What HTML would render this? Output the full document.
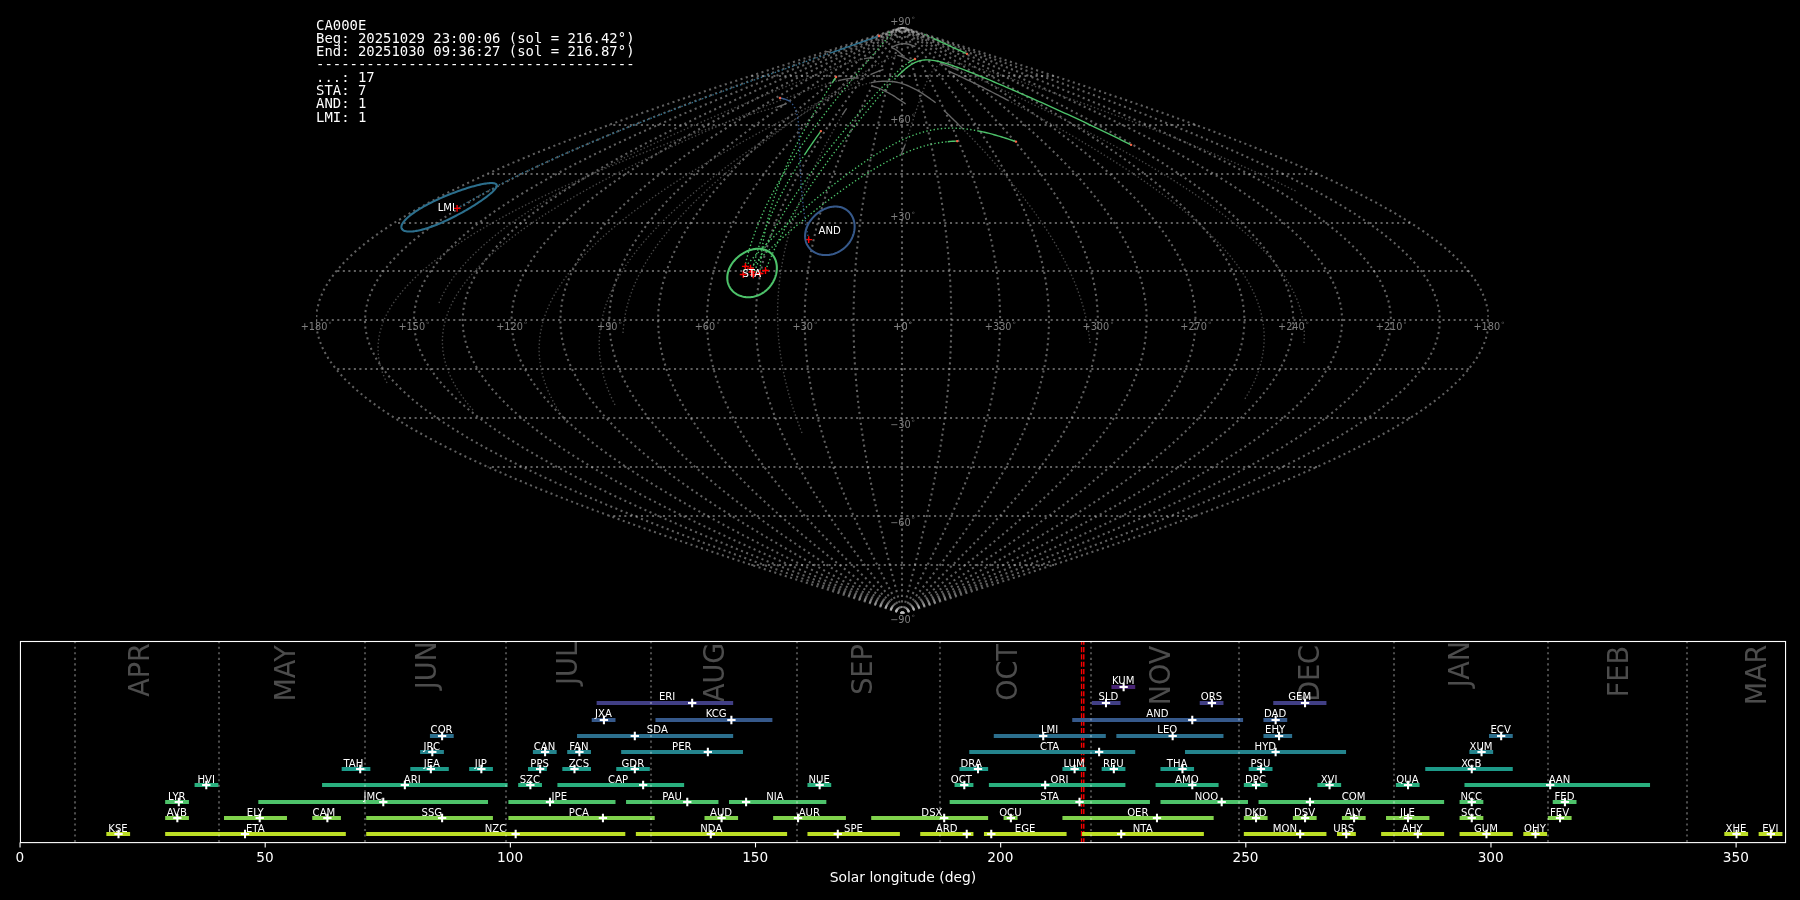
<!DOCTYPE html>
<html lang="en"><head><meta charset="utf-8"><title>Shower association CA000E</title>
<style>
html,body{margin:0;padding:0;background:#000;width:1800px;height:900px;overflow:hidden}
svg{display:block;will-change:transform;opacity:0.999}
</style></head><body>
<svg width="1800" height="900" viewBox="0 0 1800 900">
<defs>
<clipPath id="skyclip"><rect x="316.03" y="27.12" width="1172.74" height="586.37"/></clipPath>
<clipPath id="actclip"><rect x="20.45" y="641.5" width="1765.1" height="201.1"/></clipPath>
</defs>
<g clip-path="url(#skyclip)" fill="none">
<g stroke="#c0c0c0" stroke-opacity="0.5" stroke-width="2.08" stroke-dasharray="2.08 3.44">
<path d="M902 613.48L902 603.71L902 593.94L902 584.17L902 574.39L902 564.62L902 554.85L902 545.07L902 535.3L902 525.53L902 515.76L902 505.98L902 496.21L902 486.44L902 476.66L902 466.89L902 457.12L902 447.35L902 437.57L902 427.8L902 418.03L902 408.26L902 398.48L902 388.71L902 378.94L902 369.16L902 359.39L902 349.62L902 339.85L902 330.07L902 320.3L902 310.53L902 300.75L902 290.98L902 281.21L902 271.44L902 261.66L902 251.89L902 242.12L902 232.34L902 222.57L902 212.8L902 203.03L902 193.25L902 183.48L902 173.71L902 163.94L902 154.16L902 144.39L902 134.62L902 124.84L902 115.07L902 105.3L902 95.53L902 85.75L902 75.98L902 66.21L902 56.43L902 46.66L902 36.89L902 27.12"/>
<path d="M902.4 613.48L899.84 603.71L897.29 593.94L894.76 584.17L892.24 574.39L889.75 564.62L887.3 554.85L884.89 545.07L882.53 535.3L880.22 525.53L877.97 515.76L875.79 505.98L873.68 496.21L871.65 486.44L869.7 476.66L867.85 466.89L866.09 457.12L864.43 447.35L862.87 437.57L861.42 427.8L860.08 418.03L858.86 408.26L857.76 398.48L856.78 388.71L855.93 378.94L855.2 369.16L854.6 359.39L854.14 349.62L853.8 339.85L853.6 330.07L853.54 320.3L853.6 310.53L853.8 300.75L854.14 290.98L854.6 281.21L855.2 271.44L855.93 261.66L856.78 251.89L857.76 242.12L858.86 232.34L860.08 222.57L861.42 212.8L862.87 203.03L864.43 193.25L866.09 183.48L867.85 173.71L869.7 163.94L871.65 154.16L873.68 144.39L875.79 134.62L877.97 124.84L880.22 115.07L882.53 105.3L884.89 95.53L887.3 85.75L889.75 75.98L892.24 66.21L894.76 56.43L897.29 46.66L899.84 36.89L902.4 27.12"/>
<path d="M902.4 613.48L897.29 603.71L892.18 593.94L887.11 584.17L882.08 574.39L877.11 564.62L872.2 554.85L867.38 545.07L862.65 535.3L858.03 525.53L853.54 515.76L849.17 505.98L844.96 496.21L840.9 486.44L837.01 476.66L833.3 466.89L829.77 457.12L826.45 447.35L823.34 437.57L820.44 427.8L817.77 418.03L815.32 408.26L813.12 398.48L811.16 388.71L809.46 378.94L808 369.16L806.81 359.39L805.88 349.62L805.21 339.85L804.81 330.07L804.67 320.3L804.81 310.53L805.21 300.75L805.88 290.98L806.81 281.21L808 271.44L809.46 261.66L811.16 251.89L813.12 242.12L815.32 232.34L817.77 222.57L820.44 212.8L823.34 203.03L826.45 193.25L829.77 183.48L833.3 173.71L837.01 163.94L840.9 154.16L844.96 144.39L849.17 134.62L853.54 124.84L858.03 115.07L862.65 105.3L867.38 95.53L872.2 85.75L877.11 75.98L882.08 66.21L887.11 56.43L892.18 46.66L897.29 36.89L902.4 27.12"/>
<path d="M902.4 613.48L894.73 603.71L887.08 593.94L879.47 584.17L871.92 574.39L864.46 564.62L857.1 554.85L849.87 545.07L842.78 535.3L835.85 525.53L829.1 515.76L822.56 505.98L816.24 496.21L810.15 486.44L804.31 476.66L798.74 466.89L793.46 457.12L788.48 447.35L783.8 437.57L779.46 427.8L775.45 418.03L771.79 408.26L768.48 398.48L765.54 388.71L762.98 378.94L760.8 369.16L759.01 359.39L757.61 349.62L756.61 339.85L756.01 330.07L755.81 320.3L756.01 310.53L756.61 300.75L757.61 290.98L759.01 281.21L760.8 271.44L762.98 261.66L765.54 251.89L768.48 242.12L771.79 232.34L775.45 222.57L779.46 212.8L783.8 203.03L788.48 193.25L793.46 183.48L798.74 173.71L804.31 163.94L810.15 154.16L816.24 144.39L822.56 134.62L829.1 124.84L835.85 115.07L842.78 105.3L849.87 95.53L857.1 85.75L864.46 75.98L871.92 66.21L879.47 56.43L887.08 46.66L894.73 36.89L902.4 27.12"/>
<path d="M902.4 613.48L892.17 603.71L881.97 593.94L871.82 584.17L861.76 574.39L851.81 564.62L842 554.85L832.35 545.07L822.9 535.3L813.66 525.53L804.67 515.76L795.95 505.98L787.51 496.21L779.4 486.44L771.61 476.66L764.19 466.89L757.15 457.12L750.5 447.35L744.27 437.57L738.48 427.8L733.13 418.03L728.25 408.26L723.84 398.48L719.93 388.71L716.51 378.94L713.6 369.16L711.22 359.39L709.35 349.62L708.01 339.85L707.21 330.07L706.94 320.3L707.21 310.53L708.01 300.75L709.35 290.98L711.22 281.21L713.6 271.44L716.51 261.66L719.93 251.89L723.84 242.12L728.25 232.34L733.13 222.57L738.48 212.8L744.27 203.03L750.5 193.25L757.15 183.48L764.19 173.71L771.61 163.94L779.4 154.16L787.51 144.39L795.95 134.62L804.67 124.84L813.66 115.07L822.9 105.3L832.35 95.53L842 85.75L851.81 75.98L861.76 66.21L871.82 56.43L881.97 46.66L892.17 36.89L902.4 27.12"/>
<path d="M902.4 613.48L889.61 603.71L876.86 593.94L864.18 584.17L851.6 574.39L839.17 564.62L826.9 554.85L814.84 545.07L803.03 535.3L791.48 525.53L780.24 515.76L769.33 505.98L758.79 496.21L748.64 486.44L738.92 476.66L729.64 466.89L720.83 457.12L712.53 447.35L704.74 437.57L697.5 427.8L690.81 418.03L684.71 408.26L679.2 398.48L674.31 388.71L670.04 378.94L666.41 369.16L663.42 359.39L661.09 349.62L659.42 339.85L658.41 330.07L658.08 320.3L658.41 310.53L659.42 300.75L661.09 290.98L663.42 281.21L666.41 271.44L670.04 261.66L674.31 251.89L679.2 242.12L684.71 232.34L690.81 222.57L697.5 212.8L704.74 203.03L712.53 193.25L720.83 183.48L729.64 173.71L738.92 163.94L748.64 154.16L758.79 144.39L769.33 134.62L780.24 124.84L791.48 115.07L803.03 105.3L814.84 95.53L826.9 85.75L839.17 75.98L851.6 66.21L864.18 56.43L876.86 46.66L889.61 36.89L902.4 27.12"/>
<path d="M902.4 613.48L887.06 603.71L871.75 593.94L856.54 584.17L841.44 574.39L826.52 564.62L811.8 554.85L797.33 545.07L783.15 535.3L769.3 525.53L755.81 515.76L742.72 505.98L730.07 496.21L717.89 486.44L706.22 476.66L695.09 466.89L684.52 457.12L674.55 447.35L665.21 437.57L656.52 427.8L648.5 418.03L641.17 408.26L634.56 398.48L628.69 388.71L623.57 378.94L619.21 369.16L615.62 359.39L612.83 349.62L610.82 339.85L609.62 330.07L609.22 320.3L609.62 310.53L610.82 300.75L612.83 290.98L615.62 281.21L619.21 271.44L623.57 261.66L628.69 251.89L634.56 242.12L641.17 232.34L648.5 222.57L656.52 212.8L665.21 203.03L674.55 193.25L684.52 183.48L695.09 173.71L706.22 163.94L717.89 154.16L730.07 144.39L742.72 134.62L755.81 124.84L769.3 115.07L783.15 105.3L797.33 95.53L811.8 85.75L826.52 75.98L841.44 66.21L856.54 56.43L871.75 46.66L887.06 36.89L902.4 27.12"/>
<path d="M902.4 613.48L884.5 603.71L866.65 593.94L848.89 584.17L831.28 574.39L813.87 564.62L796.7 554.85L779.82 545.07L763.28 535.3L747.11 525.53L731.38 515.76L716.11 505.98L701.35 496.21L687.14 486.44L673.53 476.66L660.54 466.89L648.21 457.12L636.58 447.35L625.68 437.57L615.53 427.8L606.18 418.03L597.63 408.26L589.92 398.48L583.07 388.71L577.09 378.94L572.01 369.16L567.83 359.39L564.56 349.62L562.23 339.85L560.82 330.07L560.35 320.3L560.82 310.53L562.23 300.75L564.56 290.98L567.83 281.21L572.01 271.44L577.09 261.66L583.07 251.89L589.92 242.12L597.63 232.34L606.18 222.57L615.53 212.8L625.68 203.03L636.58 193.25L648.21 183.48L660.54 173.71L673.53 163.94L687.14 154.16L701.35 144.39L716.11 134.62L731.38 124.84L747.11 115.07L763.28 105.3L779.82 95.53L796.7 85.75L813.87 75.98L831.28 66.21L848.89 56.43L866.65 46.66L884.5 36.89L902.4 27.12"/>
<path d="M902.4 613.48L881.94 603.71L861.54 593.94L841.25 584.17L821.12 574.39L801.22 564.62L781.6 554.85L762.31 545.07L743.4 535.3L724.93 525.53L706.94 515.76L689.49 505.98L672.63 496.21L656.39 486.44L640.83 476.66L625.98 466.89L611.9 457.12L598.6 447.35L586.15 437.57L574.55 427.8L563.86 418.03L554.09 408.26L545.28 398.48L537.45 388.71L530.62 378.94L524.81 369.16L520.03 359.39L516.3 349.62L513.63 339.85L512.02 330.07L511.49 320.3L512.02 310.53L513.63 300.75L516.3 290.98L520.03 281.21L524.81 271.44L530.62 261.66L537.45 251.89L545.28 242.12L554.09 232.34L563.86 222.57L574.55 212.8L586.15 203.03L598.6 193.25L611.9 183.48L625.98 173.71L640.83 163.94L656.39 154.16L672.63 144.39L689.49 134.62L706.94 124.84L724.93 115.07L743.4 105.3L762.31 95.53L781.6 85.75L801.22 75.98L821.12 66.21L841.25 56.43L861.54 46.66L881.94 36.89L902.4 27.12"/>
<path d="M902.4 613.48L879.38 603.71L856.43 593.94L833.6 584.17L810.97 574.39L788.58 564.62L766.5 554.85L744.8 545.07L723.53 535.3L702.75 525.53L682.51 515.76L662.88 505.98L643.91 496.21L625.64 486.44L608.13 476.66L591.43 466.89L575.58 457.12L560.63 447.35L546.61 437.57L533.57 427.8L521.54 418.03L510.56 408.26L500.64 398.48L491.83 388.71L484.15 378.94L477.61 369.16L472.23 359.39L468.04 349.62L465.03 339.85L463.23 330.07L462.62 320.3L463.23 310.53L465.03 300.75L468.04 290.98L472.23 281.21L477.61 271.44L484.15 261.66L491.83 251.89L500.64 242.12L510.56 232.34L521.54 222.57L533.57 212.8L546.61 203.03L560.63 193.25L575.58 183.48L591.43 173.71L608.13 163.94L625.64 154.16L643.91 144.39L662.88 134.62L682.51 124.84L702.75 115.07L723.53 105.3L744.8 95.53L766.5 85.75L788.58 75.98L810.97 66.21L833.6 56.43L856.43 46.66L879.38 36.89L902.4 27.12"/>
<path d="M902.4 613.48L876.83 603.71L851.32 593.94L825.96 584.17L800.81 574.39L775.93 564.62L751.4 554.85L727.29 545.07L703.65 535.3L680.56 525.53L658.08 515.76L636.27 505.98L615.18 496.21L594.89 486.44L575.44 476.66L556.88 466.89L539.27 457.12L522.66 447.35L507.08 437.57L492.59 427.8L479.23 418.03L467.02 408.26L456.01 398.48L446.22 388.71L437.68 378.94L430.41 369.16L424.44 359.39L419.78 349.62L416.44 339.85L414.43 330.07L413.76 320.3L414.43 310.53L416.44 300.75L419.78 290.98L424.44 281.21L430.41 271.44L437.68 261.66L446.22 251.89L456.01 242.12L467.02 232.34L479.23 222.57L492.59 212.8L507.08 203.03L522.66 193.25L539.27 183.48L556.88 173.71L575.44 163.94L594.89 154.16L615.18 144.39L636.27 134.62L658.08 124.84L680.56 115.07L703.65 105.3L727.29 95.53L751.4 85.75L775.93 75.98L800.81 66.21L825.96 56.43L851.32 46.66L876.83 36.89L902.4 27.12"/>
<path d="M902.4 613.48L874.27 603.71L846.22 593.94L818.32 584.17L790.65 574.39L763.28 564.62L736.3 554.85L709.78 545.07L683.78 535.3L658.38 525.53L633.65 515.76L609.65 505.98L586.46 496.21L564.14 486.44L542.74 476.66L522.33 466.89L502.96 457.12L484.68 447.35L467.55 437.57L451.61 427.8L436.91 418.03L423.48 408.26L411.37 398.48L400.6 388.71L391.2 378.94L383.21 369.16L376.64 359.39L371.51 349.62L367.84 339.85L365.63 330.07L364.9 320.3L365.63 310.53L367.84 300.75L371.51 290.98L376.64 281.21L383.21 271.44L391.2 261.66L400.6 251.89L411.37 242.12L423.48 232.34L436.91 222.57L451.61 212.8L467.55 203.03L484.68 193.25L502.96 183.48L522.33 173.71L542.74 163.94L564.14 154.16L586.46 144.39L609.65 134.62L633.65 124.84L658.38 115.07L683.78 105.3L709.78 95.53L736.3 85.75L763.28 75.98L790.65 66.21L818.32 56.43L846.22 46.66L874.27 36.89L902.4 27.12"/>
<path d="M902.4 613.48L871.71 603.71L841.11 593.94L810.67 584.17L780.49 574.39L750.64 564.62L721.2 554.85L692.26 545.07L663.9 535.3L636.19 525.53L609.22 515.76L583.04 505.98L557.74 496.21L533.39 486.44L510.04 476.66L487.78 466.89L466.64 457.12L446.71 447.35L428.02 437.57L410.63 427.8L394.59 418.03L379.94 408.26L366.73 398.48L354.98 388.71L344.73 378.94L336.01 369.16L328.85 359.39L323.25 349.62L319.24 339.85L316.84 330.07L316.03 320.3L316.84 310.53L319.24 300.75L323.25 290.98L328.85 281.21L336.01 271.44L344.73 261.66L354.98 251.89L366.73 242.12L379.94 232.34L394.59 222.57L410.63 212.8L428.02 203.03L446.71 193.25L466.64 183.48L487.78 173.71L510.04 163.94L533.39 154.16L557.74 144.39L583.04 134.62L609.22 124.84L636.19 115.07L663.9 105.3L692.26 95.53L721.2 85.75L750.64 75.98L780.49 66.21L810.67 56.43L841.11 46.66L871.71 36.89L902.4 27.12"/>
<path d="M902.4 613.48L933.09 603.71L963.69 593.94L994.13 584.17L1024.31 574.39L1054.16 564.62L1083.6 554.85L1112.54 545.07L1140.9 535.3L1168.61 525.53L1195.58 515.76L1221.76 505.98L1247.06 496.21L1271.41 486.44L1294.76 476.66L1317.02 466.89L1338.16 457.12L1358.09 447.35L1376.78 437.57L1394.17 427.8L1410.21 418.03L1424.86 408.26L1438.07 398.48L1449.82 388.71L1460.07 378.94L1468.79 369.16L1475.95 359.39L1481.55 349.62L1485.56 339.85L1487.96 330.07L1488.77 320.3L1487.96 310.53L1485.56 300.75L1481.55 290.98L1475.95 281.21L1468.79 271.44L1460.07 261.66L1449.82 251.89L1438.07 242.12L1424.86 232.34L1410.21 222.57L1394.17 212.8L1376.78 203.03L1358.09 193.25L1338.16 183.48L1317.02 173.71L1294.76 163.94L1271.41 154.16L1247.06 144.39L1221.76 134.62L1195.58 124.84L1168.61 115.07L1140.9 105.3L1112.54 95.53L1083.6 85.75L1054.16 75.98L1024.31 66.21L994.13 56.43L963.69 46.66L933.09 36.89L902.4 27.12"/>
<path d="M902.4 613.48L930.53 603.71L958.58 593.94L986.48 584.17L1014.15 574.39L1041.52 564.62L1068.5 554.85L1095.02 545.07L1121.02 535.3L1146.42 525.53L1171.15 515.76L1195.15 505.98L1218.34 496.21L1240.66 486.44L1262.06 476.66L1282.47 466.89L1301.84 457.12L1320.12 447.35L1337.25 437.57L1353.19 427.8L1367.89 418.03L1381.32 408.26L1393.43 398.48L1404.2 388.71L1413.6 378.94L1421.59 369.16L1428.16 359.39L1433.29 349.62L1436.96 339.85L1439.17 330.07L1439.9 320.3L1439.17 310.53L1436.96 300.75L1433.29 290.98L1428.16 281.21L1421.59 271.44L1413.6 261.66L1404.2 251.89L1393.43 242.12L1381.32 232.34L1367.89 222.57L1353.19 212.8L1337.25 203.03L1320.12 193.25L1301.84 183.48L1282.47 173.71L1262.06 163.94L1240.66 154.16L1218.34 144.39L1195.15 134.62L1171.15 124.84L1146.42 115.07L1121.02 105.3L1095.02 95.53L1068.5 85.75L1041.52 75.98L1014.15 66.21L986.48 56.43L958.58 46.66L930.53 36.89L902.4 27.12"/>
<path d="M902.4 613.48L927.97 603.71L953.48 593.94L978.84 584.17L1003.99 574.39L1028.87 564.62L1053.4 554.85L1077.51 545.07L1101.15 535.3L1124.24 525.53L1146.72 515.76L1168.53 505.98L1189.62 496.21L1209.91 486.44L1229.36 476.66L1247.92 466.89L1265.53 457.12L1282.14 447.35L1297.72 437.57L1312.21 427.8L1325.57 418.03L1337.78 408.26L1348.79 398.48L1358.58 388.71L1367.12 378.94L1374.39 369.16L1380.36 359.39L1385.02 349.62L1388.36 339.85L1390.37 330.07L1391.04 320.3L1390.37 310.53L1388.36 300.75L1385.02 290.98L1380.36 281.21L1374.39 271.44L1367.12 261.66L1358.58 251.89L1348.79 242.12L1337.78 232.34L1325.57 222.57L1312.21 212.8L1297.72 203.03L1282.14 193.25L1265.53 183.48L1247.92 173.71L1229.36 163.94L1209.91 154.16L1189.62 144.39L1168.53 134.62L1146.72 124.84L1124.24 115.07L1101.15 105.3L1077.51 95.53L1053.4 85.75L1028.87 75.98L1003.99 66.21L978.84 56.43L953.48 46.66L927.97 36.89L902.4 27.12"/>
<path d="M902.4 613.48L925.42 603.71L948.37 593.94L971.2 584.17L993.83 574.39L1016.22 564.62L1038.3 554.85L1060 545.07L1081.27 535.3L1102.05 525.53L1122.29 515.76L1141.92 505.98L1160.89 496.21L1179.16 486.44L1196.67 476.66L1213.37 466.89L1229.22 457.12L1244.17 447.35L1258.19 437.57L1271.23 427.8L1283.26 418.03L1294.24 408.26L1304.16 398.48L1312.97 388.71L1320.65 378.94L1327.19 369.16L1332.57 359.39L1336.76 349.62L1339.77 339.85L1341.57 330.07L1342.18 320.3L1341.57 310.53L1339.77 300.75L1336.76 290.98L1332.57 281.21L1327.19 271.44L1320.65 261.66L1312.97 251.89L1304.16 242.12L1294.24 232.34L1283.26 222.57L1271.23 212.8L1258.19 203.03L1244.17 193.25L1229.22 183.48L1213.37 173.71L1196.67 163.94L1179.16 154.16L1160.89 144.39L1141.92 134.62L1122.29 124.84L1102.05 115.07L1081.27 105.3L1060 95.53L1038.3 85.75L1016.22 75.98L993.83 66.21L971.2 56.43L948.37 46.66L925.42 36.89L902.4 27.12"/>
<path d="M902.4 613.48L922.86 603.71L943.26 593.94L963.55 584.17L983.68 574.39L1003.58 564.62L1023.2 554.85L1042.49 545.07L1061.4 535.3L1079.87 525.53L1097.86 515.76L1115.31 505.98L1132.17 496.21L1148.41 486.44L1163.97 476.66L1178.82 466.89L1192.9 457.12L1206.2 447.35L1218.65 437.57L1230.25 427.8L1240.94 418.03L1250.71 408.26L1259.52 398.48L1267.35 388.71L1274.18 378.94L1279.99 369.16L1284.77 359.39L1288.5 349.62L1291.17 339.85L1292.78 330.07L1293.31 320.3L1292.78 310.53L1291.17 300.75L1288.5 290.98L1284.77 281.21L1279.99 271.44L1274.18 261.66L1267.35 251.89L1259.52 242.12L1250.71 232.34L1240.94 222.57L1230.25 212.8L1218.65 203.03L1206.2 193.25L1192.9 183.48L1178.82 173.71L1163.97 163.94L1148.41 154.16L1132.17 144.39L1115.31 134.62L1097.86 124.84L1079.87 115.07L1061.4 105.3L1042.49 95.53L1023.2 85.75L1003.58 75.98L983.68 66.21L963.55 56.43L943.26 46.66L922.86 36.89L902.4 27.12"/>
<path d="M902.4 613.48L920.3 603.71L938.15 593.94L955.91 584.17L973.52 574.39L990.93 564.62L1008.1 554.85L1024.98 545.07L1041.52 535.3L1057.69 525.53L1073.42 515.76L1088.69 505.98L1103.45 496.21L1117.66 486.44L1131.27 476.66L1144.26 466.89L1156.59 457.12L1168.22 447.35L1179.12 437.57L1189.27 427.8L1198.62 418.03L1207.17 408.26L1214.88 398.48L1221.73 388.71L1227.71 378.94L1232.79 369.16L1236.97 359.39L1240.24 349.62L1242.57 339.85L1243.98 330.07L1244.45 320.3L1243.98 310.53L1242.57 300.75L1240.24 290.98L1236.97 281.21L1232.79 271.44L1227.71 261.66L1221.73 251.89L1214.88 242.12L1207.17 232.34L1198.62 222.57L1189.27 212.8L1179.12 203.03L1168.22 193.25L1156.59 183.48L1144.26 173.71L1131.27 163.94L1117.66 154.16L1103.45 144.39L1088.69 134.62L1073.42 124.84L1057.69 115.07L1041.52 105.3L1024.98 95.53L1008.1 85.75L990.93 75.98L973.52 66.21L955.91 56.43L938.15 46.66L920.3 36.89L902.4 27.12"/>
<path d="M902.4 613.48L917.74 603.71L933.05 593.94L948.26 584.17L963.36 574.39L978.28 564.62L993 554.85L1007.47 545.07L1021.65 535.3L1035.5 525.53L1048.99 515.76L1062.08 505.98L1074.73 496.21L1086.91 486.44L1098.58 476.66L1109.71 466.89L1120.28 457.12L1130.25 447.35L1139.59 437.57L1148.28 427.8L1156.3 418.03L1163.63 408.26L1170.24 398.48L1176.11 388.71L1181.23 378.94L1185.59 369.16L1189.18 359.39L1191.97 349.62L1193.98 339.85L1195.18 330.07L1195.58 320.3L1195.18 310.53L1193.98 300.75L1191.97 290.98L1189.18 281.21L1185.59 271.44L1181.23 261.66L1176.11 251.89L1170.24 242.12L1163.63 232.34L1156.3 222.57L1148.28 212.8L1139.59 203.03L1130.25 193.25L1120.28 183.48L1109.71 173.71L1098.58 163.94L1086.91 154.16L1074.73 144.39L1062.08 134.62L1048.99 124.84L1035.5 115.07L1021.65 105.3L1007.47 95.53L993 85.75L978.28 75.98L963.36 66.21L948.26 56.43L933.05 46.66L917.74 36.89L902.4 27.12"/>
<path d="M902.4 613.48L915.19 603.71L927.94 593.94L940.62 584.17L953.2 574.39L965.63 564.62L977.9 554.85L989.96 545.07L1001.77 535.3L1013.32 525.53L1024.56 515.76L1035.47 505.98L1046.01 496.21L1056.16 486.44L1065.88 476.66L1075.16 466.89L1083.97 457.12L1092.27 447.35L1100.06 437.57L1107.3 427.8L1113.99 418.03L1120.09 408.26L1125.6 398.48L1130.49 388.71L1134.76 378.94L1138.39 369.16L1141.38 359.39L1143.71 349.62L1145.38 339.85L1146.39 330.07L1146.72 320.3L1146.39 310.53L1145.38 300.75L1143.71 290.98L1141.38 281.21L1138.39 271.44L1134.76 261.66L1130.49 251.89L1125.6 242.12L1120.09 232.34L1113.99 222.57L1107.3 212.8L1100.06 203.03L1092.27 193.25L1083.97 183.48L1075.16 173.71L1065.88 163.94L1056.16 154.16L1046.01 144.39L1035.47 134.62L1024.56 124.84L1013.32 115.07L1001.77 105.3L989.96 95.53L977.9 85.75L965.63 75.98L953.2 66.21L940.62 56.43L927.94 46.66L915.19 36.89L902.4 27.12"/>
<path d="M902.4 613.48L912.63 603.71L922.83 593.94L932.98 584.17L943.04 574.39L952.99 564.62L962.8 554.85L972.45 545.07L981.9 535.3L991.14 525.53L1000.13 515.76L1008.85 505.98L1017.29 496.21L1025.4 486.44L1033.19 476.66L1040.61 466.89L1047.65 457.12L1054.3 447.35L1060.53 437.57L1066.32 427.8L1071.67 418.03L1076.55 408.26L1080.96 398.48L1084.87 388.71L1088.29 378.94L1091.2 369.16L1093.58 359.39L1095.45 349.62L1096.79 339.85L1097.59 330.07L1097.86 320.3L1097.59 310.53L1096.79 300.75L1095.45 290.98L1093.58 281.21L1091.2 271.44L1088.29 261.66L1084.87 251.89L1080.96 242.12L1076.55 232.34L1071.67 222.57L1066.32 212.8L1060.53 203.03L1054.3 193.25L1047.65 183.48L1040.61 173.71L1033.19 163.94L1025.4 154.16L1017.29 144.39L1008.85 134.62L1000.13 124.84L991.14 115.07L981.9 105.3L972.45 95.53L962.8 85.75L952.99 75.98L943.04 66.21L932.98 56.43L922.83 46.66L912.63 36.89L902.4 27.12"/>
<path d="M902.4 613.48L910.07 603.71L917.72 593.94L925.33 584.17L932.88 574.39L940.34 564.62L947.7 554.85L954.93 545.07L962.02 535.3L968.95 525.53L975.7 515.76L982.24 505.98L988.56 496.21L994.65 486.44L1000.49 476.66L1006.06 466.89L1011.34 457.12L1016.32 447.35L1021 437.57L1025.34 427.8L1029.35 418.03L1033.01 408.26L1036.32 398.48L1039.26 388.71L1041.82 378.94L1044 369.16L1045.79 359.39L1047.19 349.62L1048.19 339.85L1048.79 330.07L1048.99 320.3L1048.79 310.53L1048.19 300.75L1047.19 290.98L1045.79 281.21L1044 271.44L1041.82 261.66L1039.26 251.89L1036.32 242.12L1033.01 232.34L1029.35 222.57L1025.34 212.8L1021 203.03L1016.32 193.25L1011.34 183.48L1006.06 173.71L1000.49 163.94L994.65 154.16L988.56 144.39L982.24 134.62L975.7 124.84L968.95 115.07L962.02 105.3L954.93 95.53L947.7 85.75L940.34 75.98L932.88 66.21L925.33 56.43L917.72 46.66L910.07 36.89L902.4 27.12"/>
<path d="M902.4 613.48L907.51 603.71L912.62 593.94L917.69 584.17L922.72 574.39L927.69 564.62L932.6 554.85L937.42 545.07L942.15 535.3L946.77 525.53L951.26 515.76L955.63 505.98L959.84 496.21L963.9 486.44L967.79 476.66L971.5 466.89L975.03 457.12L978.35 447.35L981.46 437.57L984.36 427.8L987.03 418.03L989.48 408.26L991.68 398.48L993.64 388.71L995.34 378.94L996.8 369.16L997.99 359.39L998.92 349.62L999.59 339.85L999.99 330.07L1000.13 320.3L999.99 310.53L999.59 300.75L998.92 290.98L997.99 281.21L996.8 271.44L995.34 261.66L993.64 251.89L991.68 242.12L989.48 232.34L987.03 222.57L984.36 212.8L981.46 203.03L978.35 193.25L975.03 183.48L971.5 173.71L967.79 163.94L963.9 154.16L959.84 144.39L955.63 134.62L951.26 124.84L946.77 115.07L942.15 105.3L937.42 95.53L932.6 85.75L927.69 75.98L922.72 66.21L917.69 56.43L912.62 46.66L907.51 36.89L902.4 27.12"/>
<path d="M902.4 613.48L904.96 603.71L907.51 593.94L910.04 584.17L912.56 574.39L915.05 564.62L917.5 554.85L919.91 545.07L922.27 535.3L924.58 525.53L926.83 515.76L929.01 505.98L931.12 496.21L933.15 486.44L935.1 476.66L936.95 466.89L938.71 457.12L940.37 447.35L941.93 437.57L943.38 427.8L944.72 418.03L945.94 408.26L947.04 398.48L948.02 388.71L948.87 378.94L949.6 369.16L950.2 359.39L950.66 349.62L951 339.85L951.2 330.07L951.26 320.3L951.2 310.53L951 300.75L950.66 290.98L950.2 281.21L949.6 271.44L948.87 261.66L948.02 251.89L947.04 242.12L945.94 232.34L944.72 222.57L943.38 212.8L941.93 203.03L940.37 193.25L938.71 183.48L936.95 173.71L935.1 163.94L933.15 154.16L931.12 144.39L929.01 134.62L926.83 124.84L924.58 115.07L922.27 105.3L919.91 95.53L917.5 85.75L915.05 75.98L912.56 66.21L910.04 56.43L907.51 46.66L904.96 36.89L902.4 27.12"/>
<path d="M902.4 613L902.4 613L902.4 613L902.4 613L902.4 613L902.4 613L902.4 613L902.4 613L902.4 613L902.4 613L902.4 613L902.4 613L902.4 613"/>
<path d="M902.4 613L902.4 613L902.4 613L902.4 613L902.4 613L902.4 613L902.4 613L902.4 613L902.4 613L902.4 613L902.4 613L902.4 613L902.4 613"/>
<path d="M902.4 565L889.75 565L877.11 565L864.46 565L851.81 565L839.17 565L826.52 565L813.87 565L801.22 565L788.58 565L775.93 565L763.28 565L750.64 565"/>
<path d="M1054.16 565L1041.52 565L1028.87 565L1016.22 565L1003.58 565L990.93 565L978.28 565L965.63 565L952.99 565L940.34 565L927.69 565L915.05 565L902.4 565"/>
<path d="M902.4 516L877.97 516L853.54 516L829.1 516L804.67 516L780.24 516L755.81 516L731.38 516L706.94 516L682.51 516L658.08 516L633.65 516L609.22 516"/>
<path d="M1195.58 516L1171.15 516L1146.72 516L1122.29 516L1097.86 516L1073.42 516L1048.99 516L1024.56 516L1000.13 516L975.7 516L951.26 516L926.83 516L902.4 516"/>
<path d="M902.4 467L867.85 467L833.3 467L798.74 467L764.19 467L729.64 467L695.09 467L660.54 467L625.98 467L591.43 467L556.88 467L522.33 467L487.78 467"/>
<path d="M1317.02 467L1282.47 467L1247.92 467L1213.37 467L1178.82 467L1144.26 467L1109.71 467L1075.16 467L1040.61 467L1006.06 467L971.5 467L936.95 467L902.4 467"/>
<path d="M902.4 418L860.08 418L817.77 418L775.45 418L733.13 418L690.81 418L648.5 418L606.18 418L563.86 418L521.54 418L479.23 418L436.91 418L394.59 418"/>
<path d="M1410.21 418L1367.89 418L1325.57 418L1283.26 418L1240.94 418L1198.62 418L1156.3 418L1113.99 418L1071.67 418L1029.35 418L987.03 418L944.72 418L902.4 418"/>
<path d="M902.4 369L855.2 369L808 369L760.8 369L713.6 369L666.41 369L619.21 369L572.01 369L524.81 369L477.61 369L430.41 369L383.21 369L336.01 369"/>
<path d="M1468.79 369L1421.59 369L1374.39 369L1327.19 369L1279.99 369L1232.79 369L1185.59 369L1138.39 369L1091.2 369L1044 369L996.8 369L949.6 369L902.4 369"/>
<path d="M902.4 320L853.54 320L804.67 320L755.81 320L706.94 320L658.08 320L609.22 320L560.35 320L511.49 320L462.62 320L413.76 320L364.9 320L316.03 320"/>
<path d="M1488.77 320L1439.9 320L1391.04 320L1342.18 320L1293.31 320L1244.45 320L1195.58 320L1146.72 320L1097.86 320L1048.99 320L1000.13 320L951.26 320L902.4 320"/>
<path d="M902.4 271L855.2 271L808 271L760.8 271L713.6 271L666.41 271L619.21 271L572.01 271L524.81 271L477.61 271L430.41 271L383.21 271L336.01 271"/>
<path d="M1468.79 271L1421.59 271L1374.39 271L1327.19 271L1279.99 271L1232.79 271L1185.59 271L1138.39 271L1091.2 271L1044 271L996.8 271L949.6 271L902.4 271"/>
<path d="M902.4 223L860.08 223L817.77 223L775.45 223L733.13 223L690.81 223L648.5 223L606.18 223L563.86 223L521.54 223L479.23 223L436.91 223L394.59 223"/>
<path d="M1410.21 223L1367.89 223L1325.57 223L1283.26 223L1240.94 223L1198.62 223L1156.3 223L1113.99 223L1071.67 223L1029.35 223L987.03 223L944.72 223L902.4 223"/>
<path d="M902.4 174L867.85 174L833.3 174L798.74 174L764.19 174L729.64 174L695.09 174L660.54 174L625.98 174L591.43 174L556.88 174L522.33 174L487.78 174"/>
<path d="M1317.02 174L1282.47 174L1247.92 174L1213.37 174L1178.82 174L1144.26 174L1109.71 174L1075.16 174L1040.61 174L1006.06 174L971.5 174L936.95 174L902.4 174"/>
<path d="M902.4 125L877.97 125L853.54 125L829.1 125L804.67 125L780.24 125L755.81 125L731.38 125L706.94 125L682.51 125L658.08 125L633.65 125L609.22 125"/>
<path d="M1195.58 125L1171.15 125L1146.72 125L1122.29 125L1097.86 125L1073.42 125L1048.99 125L1024.56 125L1000.13 125L975.7 125L951.26 125L926.83 125L902.4 125"/>
<path d="M902.4 76L889.75 76L877.11 76L864.46 76L851.81 76L839.17 76L826.52 76L813.87 76L801.22 76L788.58 76L775.93 76L763.28 76L750.64 76"/>
<path d="M1054.16 76L1041.52 76L1028.87 76L1016.22 76L1003.58 76L990.93 76L978.28 76L965.63 76L952.99 76L940.34 76L927.69 76L915.05 76L902.4 76"/>
<path d="M902.4 27L902.4 27L902.4 27L902.4 27L902.4 27L902.4 27L902.4 27L902.4 27L902.4 27L902.4 27L902.4 27L902.4 27L902.4 27"/>
<path d="M902.4 27L902.4 27L902.4 27L902.4 27L902.4 27L902.4 27L902.4 27L902.4 27L902.4 27L902.4 27L902.4 27L902.4 27L902.4 27"/>
</g>
<g stroke-linecap="butt" stroke-linejoin="round">
<path d="M623 333L623.38 327.42L624 321.85L624.88 316.27L626 310.69L627.37 305.12L628.99 299.54L630.84 293.96L632.94 288.39L635.29 282.81L637.86 277.24L640.68 271.67L643.73 266.1L647 260.52L650.51 254.96L654.24 249.39L658.18 243.82L662.35 238.26L666.72 232.69L671.31 227.13L676.09 221.58L681.08 216.02L686.26 210.47L691.63 204.92L697.18 199.38L702.9 193.84L708.8 188.3L714.87 182.77L721.09 177.25L727.47 171.73L733.99 166.22L740.65 160.72L747.44 155.23L754.35 149.75L761.38 144.28L768.51 138.83L775.74 133.39L783.06 127.97L790.45 122.58L797.91 117.21L805.41 111.87L812.96 106.58L820.53 101.32L828.1 96.13L835.66 91.01L843.17 85.98L850.62 81.06L857.96 76.3L865.15 71.73L872.15 67.42L878.9 63.48L885.35 60.03L891.47 57.24L897.3 55.3" stroke="#666666" stroke-width="1.39" stroke-dasharray="1.39 2.29" stroke-opacity="0.7"/>
<path d="M439 303L441.37 297.51L444.14 292.03L447.3 286.55L450.85 281.06L454.8 275.58L459.13 270.1L463.84 264.62L468.93 259.14L474.39 253.66L480.21 248.19L486.4 242.72L492.94 237.25L499.84 231.78L507.07 226.31L514.64 220.85L522.54 215.39L530.75 209.94L539.28 204.49L548.11 199.04L557.24 193.6L566.65 188.17L576.33 182.74L586.28 177.32L596.48 171.9L606.92 166.5L617.59 161.11L628.48 155.72L639.57 150.35L650.86 145L662.32 139.66L673.93 134.34L685.69 129.05L697.57 123.78L709.56 118.54L721.62 113.34L733.74 108.19L745.88 103.08L758.01 98.04L770.09 93.08L782.08 88.22L793.91 83.49L805.51 78.91L816.79 74.53L827.65 70.43L837.96 66.67L847.55 63.37L856.28 60.66L864 58.7" stroke="#666666" stroke-width="1.39" stroke-dasharray="1.39 2.29" stroke-opacity="0.7"/>
<path d="M615 405L612.31 399.56L609.86 394.11L607.65 388.66L605.7 383.21L604 377.76L602.55 372.3L601.35 366.84L600.42 361.38L599.74 355.92L599.32 350.45L599.16 344.99L599.26 339.52L599.62 334.05L600.24 328.59L601.12 323.12L602.26 317.65L603.65 312.18L605.3 306.72L607.21 301.25L609.37 295.78L611.78 290.32L614.44 284.85L617.34 279.39L620.49 273.93L623.88 268.47L627.51 263.01L631.37 257.56L635.46 252.11L639.78 246.66L644.32 241.21L649.07 235.77L654.04 230.33L659.21 224.9L664.59 219.47L670.16 214.05L675.93 208.63L681.88 203.22L688.01 197.82L694.3 192.43L700.77 187.05L707.39 181.68L714.16 176.32L721.07 170.97L728.12 165.64L735.29 160.32L742.58 155.02L749.97 149.75L757.46 144.5L765.03 139.27L772.68 134.08L780.38 128.93L788.13 123.81L795.92 118.75L803.71 113.75L811.51 108.82L819.28 103.97L827 99.22L834.65 94.59L842.2 90.11L849.61 85.81L856.86 81.74L863.9 77.95L870.7 74.5" stroke="#666666" stroke-width="1.39" stroke-dasharray="1.39 2.29" stroke-opacity="0.7"/>
<path d="M473 410L468.47 404.67L464.29 399.33L460.46 393.98L456.98 388.63L453.87 383.27L451.12 377.91L448.75 372.55L446.74 367.18L445.11 361.8L443.86 356.43L442.99 351.05L442.5 345.67L442.39 340.29L442.66 334.9L443.32 329.52L444.35 324.13L445.77 318.75L447.57 313.36L449.74 307.98L452.3 302.6L455.22 297.21L458.52 291.83L462.19 286.45L466.22 281.08L470.61 275.7L475.36 270.33L480.46 264.96L485.9 259.6L491.69 254.24L497.81 248.89L504.25 243.54L511.02 238.2L518.1 232.86L525.49 227.53L533.17 222.21L541.14 216.9L549.39 211.6L557.92 206.32L566.7 201.04L575.73 195.78L584.99 190.53L594.49 185.3L604.19 180.09L614.1 174.9L624.19 169.74L634.46 164.6L644.88 159.49L655.44 154.41L666.11 149.37L676.89 144.38L687.75 139.43L698.67 134.53L709.62 129.7L720.58 124.94L731.51 120.26L742.38 115.68L753.16 111.22L763.81 106.88L774.28 102.7L784.52 98.7L794.48 94.91L804.1 91.38L813.31 88.14L822.07 85.24L830.32 82.74L838 80.7" stroke="#666666" stroke-width="1.39" stroke-dasharray="1.39 2.29" stroke-opacity="0.7"/>
<path d="M567 423L563.23 417.76L559.71 412.51L556.46 407.26L553.48 401.99L550.76 396.72L548.32 391.43L546.16 386.15L544.29 380.85L542.69 375.56L541.39 370.25L540.37 364.95L539.65 359.64L539.22 354.32L539.08 349.01L539.24 343.69L539.69 338.37L540.43 333.05L541.47 327.73L542.8 322.4L544.43 317.08L546.34 311.76L548.55 306.44L551.04 301.11L553.82 295.79L556.88 290.48L560.22 285.16L563.83 279.85L567.72 274.54L571.88 269.23L576.31 263.93L580.99 258.63L585.93 253.34L591.12 248.06L596.55 242.78L602.23 237.5L608.13 232.24L614.27 226.98L620.62 221.74L627.19 216.5L633.96 211.28L640.93 206.07L648.08 200.87L655.42 195.69L662.93 190.53L670.61 185.38L678.43 180.26L686.39 175.16L694.49 170.09L702.7 165.05L711.02 160.04L719.44 155.06L727.93 150.13L736.49 145.25L745.09 140.41L753.73 135.64L762.37 130.94L771.01 126.32L779.63 121.78L788.18 117.36L796.67 113.05L805.04 108.88L813.29 104.87L821.37 101.05L829.25 97.45L836.91 94.1L844.32 91.05L851.44 88.34L858.27 86.01L864.78 84.12L871 82.7" stroke="#666666" stroke-width="1.39" stroke-dasharray="1.39 2.29" stroke-opacity="0.7"/>
<path d="M387 383L384.56 377.89L382.5 372.77L380.82 367.64L379.54 362.51L378.64 357.37L378.14 352.22L378.04 347.07L378.33 341.92L379.03 336.76L380.12 331.61L381.61 326.45L383.5 321.28L385.79 316.12L388.47 310.96L391.54 305.8L395.01 300.65L398.86 295.49L403.09 290.34L407.7 285.19L412.69 280.05L418.04 274.91L423.75 269.78L429.82 264.66L436.24 259.55L443 254.44L450.09 249.35L457.51 244.27L465.24 239.2L473.28 234.14L481.62 229.1L490.24 224.08L499.14 219.08L508.29 214.09L517.7 209.13L527.34 204.2L537.2 199.29L547.27 194.41L557.53 189.57L567.97 184.76L578.56 179.99L589.29 175.26L600.14 170.58L611.09 165.96L622.11 161.4L633.18 156.9L644.28 152.48L655.39 148.13L666.46 143.88L677.48 139.73L688.4 135.69L699.2 131.78L709.85 128.01L720.3 124.4L730.51 120.97L740.45 117.73L750.08 114.71L759.35 111.93L768.24 109.42L776.7 107.2" stroke="#666666" stroke-width="1.39" stroke-dasharray="1.39 2.29" stroke-opacity="0.7"/>
<path d="M802 433L799.83 427.42L797.75 421.84L795.76 416.26L793.87 410.68L792.08 405.1L790.38 399.52L788.78 393.95L787.29 388.37L785.9 382.79L784.61 377.21L783.43 371.63L782.35 366.05L781.39 360.47L780.53 354.89L779.77 349.31L779.13 343.73L778.6 338.15L778.18 332.57L777.87 326.99L777.67 321.41L777.58 315.83L777.61 310.25L777.74 304.67L777.99 299.09L778.35 293.51L778.82 287.93L779.4 282.35L780.09 276.77L780.89 271.19L781.79 265.61L782.81 260.03L783.93 254.45L785.16 248.88L786.49 243.3L787.93 237.72L789.47 232.14L791.1 226.56L792.84 220.98L794.68 215.4L796.61 209.82L798.64 204.24L800.76 198.66L802.97 193.08L805.27 187.5L807.66 181.93L810.13 176.35L812.68 170.77L815.31 165.19L818.02 159.61L820.81 154.04L823.67 148.46L826.6 142.88L829.59 137.3L832.66 131.73L835.78 126.15L838.96 120.57L842.2 115" stroke="#666666" stroke-width="1.39" stroke-dasharray="1.39 2.29" stroke-opacity="0.7"/>
<path d="M1295.6 191L1284.59 185.58L1273.27 180.17L1261.66 174.78L1249.77 169.39L1237.62 164.02L1225.23 158.66L1212.6 153.32L1199.76 148L1186.72 142.7L1173.51 137.42L1160.15 132.17L1146.66 126.96L1133.06 121.79L1119.39 116.66L1105.69 111.59L1091.97 106.58L1078.3 101.65L1064.72 96.81L1051.29 92.09L1038.08 87.52L1025.18 83.12L1012.68 78.94L1000.72 75.05L989.43 71.51L978.98 68.42L969.51 65.89L961.18 64.02L954.05 62.93L948.13 62.69L943.3 63.31L939.39 64.75L936.18 66.92L933.5 69.71L931.17 73L929.08 76.71L927.15 80.73L925.32 85.01L923.56 89.49L921.84 94.13L920.14 98.91L918.46 103.79L916.78 108.75L915.11 113.79L913.43 118.89L911.75 124.04L910.07 129.23L908.38 134.45L906.69 139.71L905 145" stroke="#666666" stroke-width="1.39" stroke-dasharray="1.39 2.29" stroke-opacity="0.7"/>
<path d="M1090 343L1089.42 337.58L1088.67 332.16L1087.77 326.74L1086.72 321.32L1085.51 315.9L1084.14 310.48L1082.62 305.06L1080.95 299.64L1079.13 294.22L1077.16 288.81L1075.04 283.39L1072.78 277.98L1070.38 272.56L1067.83 267.15L1065.15 261.75L1062.33 256.34L1059.38 250.94L1056.29 245.54L1053.08 240.14L1049.75 234.75L1046.29 229.36L1042.72 223.98L1039.03 218.6L1035.23 213.23L1031.33 207.87L1027.32 202.51L1023.21 197.16L1019.01 191.82L1014.72 186.49L1010.34 181.17L1005.88 175.86L1001.35 170.57L996.74 165.3L992.07 160.04L987.34 154.8L982.56 149.58L977.72 144.39L972.85 139.22L967.94 134.09L963 129" stroke="#666666" stroke-width="1.39" stroke-dasharray="1.39 2.29" stroke-opacity="0.7"/>
<path d="M1304 343L1304.32 337.45L1304.28 331.89L1303.88 326.34L1303.13 320.78L1302.02 315.23L1300.56 309.68L1298.75 304.12L1296.59 298.57L1294.07 293.02L1291.21 287.46L1288.01 281.91L1284.47 276.36L1280.59 270.81L1276.38 265.27L1271.83 259.72L1266.97 254.18L1261.78 248.63L1256.28 243.1L1250.47 237.56L1244.35 232.02L1237.94 226.49L1231.24 220.97L1224.25 215.44L1216.98 209.92L1209.45 204.41L1201.65 198.9L1193.61 193.4L1185.31 187.9L1176.79 182.41L1168.03 176.93L1159.06 171.46L1149.89 166L1140.52 160.55L1130.96 155.11L1121.24 149.69L1111.36 144.29L1101.33 138.9L1091.18 133.54L1080.91 128.21L1070.54 122.9L1060.1 117.64L1049.61 112.41L1039.08 107.24L1028.55 102.13L1018.04 97.1L1007.61 92.16L997.28 87.33L987.11 82.66L977.17 78.17L967.54 73.93L958.3 70" stroke="#666666" stroke-width="1.39" stroke-dasharray="1.39 2.29" stroke-opacity="0.7"/>
<path d="M1244.95 398.86L1248.22 393.38L1251.19 387.9L1253.86 382.42L1256.24 376.93L1258.3 371.44L1260.06 365.96L1261.52 360.47L1262.66 354.97L1263.49 349.48L1264.01 343.99L1264.21 338.49L1264.1 333L1263.68 327.5L1262.94 322.01L1261.89 316.51L1260.54 311.02L1258.87 305.53L1256.89 300.03L1254.6 294.54L1252.01 289.04L1249.12 283.55L1245.93 278.06L1242.44 272.57L1238.65 267.08L1234.58 261.6L1230.22 256.11L1225.58 250.63L1220.67 245.15L1215.48 239.67L1210.02 234.2L1204.3 228.73L1198.33 223.26L1192.1 217.79L1185.63 212.34L1178.93 206.88L1171.99 201.43L1164.83 195.99L1157.46 190.55L1149.88 185.12L1142.09 179.7L1134.12 174.29L1125.97 168.89L1117.64 163.5L1109.15 158.12L1100.51 152.76L1091.73 147.42L1082.83 142.09L1073.8 136.79L1064.67 131.51L1055.46 126.27L1046.17 121.05L1036.83 115.88L1027.46 110.76L1018.07 105.69L1008.7 100.7" stroke="#666666" stroke-width="1.39" stroke-dasharray="1.39 2.29" stroke-opacity="0.7"/>
<path d="M760 273.5L760.08 271.52L760.17 269.55L760.28 267.57L760.4 265.6L760.54 263.62L760.69 261.65L760.87 259.67L761.05 257.7L761.26 255.73L761.47 253.75L761.71 251.78L761.96 249.8L762.22 247.83L762.51 245.86L762.8 243.89L763.11 241.91L763.44 239.94L763.79 237.97L764.14 236L764.52 234.03L764.91 232.05L765.31 230.08L765.73 228.11L766.16 226.14L766.61 224.17L767.08 222.2L767.56 220.24L768.05 218.27L768.56 216.3L769.08 214.33L769.62 212.36L770.18 210.4L770.74 208.43L771.32 206.47L771.92 204.5L772.53 202.54L773.15 200.57L773.79 198.61L774.44 196.65L775.11 194.68L775.79 192.72L776.48 190.76L777.19 188.8L777.91 186.84L778.64 184.88L779.39 182.93L780.15 180.97L780.92 179.01L781.71 177.06L782.5 175.1L783.31 173.15L784.14 171.2L784.97 169.25L785.82 167.3L786.68 165.35L787.55 163.4L788.43 161.45L789.32 159.51L790.23 157.56L791.15 155.62L792.07 153.68L793.01 151.74L793.96 149.81L794.92 147.87L795.89 145.94L796.87 144L797.85 142.07L798.85 140.15L799.86 138.22L800.87 136.3L801.9 134.38L802.93 132.46L803.97 130.55L805.02 128.63L806.08 126.72L807.14 124.82L808.21 122.92L809.29 121.02L810.37 119.12L811.46 117.23L812.56 115.35L813.65 113.47L814.76 111.59L815.86 109.72L816.97 107.86L818.08 106L819.2 104.15L820.31 102.3L821.42 100.47L822.54 98.64L823.65 96.82L824.75 95.01L825.86 93.21L826.95 91.43L828.05 89.65L829.13 87.89L830.2 86.14L831.26 84.41L832.3 82.7" stroke="#4ec36b" stroke-width="1.39" stroke-dasharray="1.39 2.29"/>
<path d="M765.5 270.5L766.29 268.46L767.1 266.41L767.92 264.37L768.75 262.32L769.61 260.28L770.48 258.23L771.36 256.19L772.27 254.15L773.18 252.11L774.11 250.06L775.06 248.02L776.02 245.98L777 243.94L777.99 241.9L779 239.86L780.02 237.82L781.06 235.78L782.11 233.74L783.17 231.7L784.25 229.66L785.35 227.62L786.45 225.58L787.57 223.54L788.71 221.51L789.85 219.47L791.01 217.44L792.19 215.4L793.37 213.37L794.57 211.33L795.78 209.3L797.01 207.27L798.24 205.24L799.49 203.2L800.75 201.17L802.02 199.14L803.31 197.12L804.6 195.09L805.91 193.06L807.23 191.04L808.55 189.01L809.89 186.99L811.24 184.96L812.6 182.94L813.97 180.92L815.35 178.9L816.73 176.88L818.13 174.87L819.54 172.85L820.96 170.84L822.38 168.82L823.81 166.81L825.26 164.8L826.71 162.79L828.16 160.79L829.63 158.78L831.1 156.78L832.58 154.78L834.07 152.78L835.57 150.78L837.07 148.79L838.57 146.8L840.09 144.81L841.61 142.82L843.13 140.84L844.66 138.86L846.2 136.88L847.74 134.91L849.28 132.94L850.83 130.97L852.38 129.01L853.94 127.05L855.5 125.1L857.06 123.15L858.63 121.2L860.19 119.27L861.77 117.33L863.34 115.41L864.91 113.49L866.49 111.57L868.06 109.67L869.64 107.77L871.21 105.88L872.79 104L874.36 102.13L875.94 100.27L877.51 98.42L879.08 96.58L880.65 94.76L882.22 92.95L883.78 91.15L885.35 89.38L886.9 87.62L888.46 85.88L890.01 84.17L891.55 82.48L893.1 80.81L894.64 79.17L896.17 77.57L897.7 76" stroke="#4ec36b" stroke-width="1.39" stroke-dasharray="1.39 2.29"/>
<path d="M753.25 274.75L754.1 272.48L754.98 270.2L755.87 267.93L756.79 265.66L757.73 263.39L758.69 261.11L759.68 258.84L760.68 256.57L761.7 254.3L762.75 252.03L763.81 249.76L764.9 247.49L766.01 245.22L767.13 242.95L768.28 240.68L769.45 238.41L770.63 236.14L771.84 233.87L773.06 231.6L774.3 229.34L775.56 227.07L776.84 224.81L778.14 222.54L779.46 220.28L780.79 218.01L782.14 215.75L783.51 213.48L784.9 211.22L786.3 208.96L787.72 206.7L789.16 204.44L790.61 202.18L792.08 199.92L793.57 197.67L795.07 195.41L796.58 193.16L798.11 190.9L799.66 188.65L801.22 186.4L802.79 184.14L804.38 181.9L805.98 179.65L807.59 177.4L809.22 175.15L810.86 172.91L812.51 170.67L814.18 168.43L815.85 166.19L817.54 163.95L819.24 161.71L820.95 159.48L822.67 157.25L824.4 155.02L826.14 152.79L827.89 150.57L829.65 148.35L831.42 146.13L833.2 143.91L834.99 141.7L836.78 139.49L838.58 137.28L840.39 135.08L842.2 132.88L844.02 130.69L845.85 128.5L847.68 126.31L849.52 124.13L851.36 121.96L853.2 119.79L855.05 117.63L856.9 115.47L858.76 113.32L860.61 111.18L862.47 109.05L864.33 106.92L866.19 104.81L868.05 102.71L869.91 100.61L871.77 98.53L873.62 96.47L875.48 94.42L877.33 92.38L879.18 90.37L881.02 88.37L882.86 86.39L884.69 84.44L886.52 82.52L888.34 80.62L890.15 78.76L891.96 76.93L893.76 75.14L895.55 73.4L897.33 71.71L899.11 70.08L900.89 68.5L902.66 67L904.43 65.58L906.21 64.24L908 63" stroke="#4ec36b" stroke-width="1.39" stroke-dasharray="1.39 2.29"/>
<path d="M743.25 274.5L743.74 271.9L744.27 269.31L744.82 266.71L745.41 264.11L746.02 261.52L746.67 258.92L747.35 256.32L748.05 253.72L748.79 251.13L749.56 248.53L750.35 245.93L751.18 243.34L752.03 240.74L752.91 238.14L753.83 235.55L754.77 232.95L755.74 230.35L756.73 227.76L757.76 225.16L758.81 222.56L759.9 219.97L761 217.37L762.14 214.77L763.31 212.18L764.5 209.58L765.71 206.98L766.96 204.39L768.23 201.79L769.52 199.2L770.85 196.6L772.19 194L773.57 191.41L774.96 188.81L776.38 186.21L777.83 183.62L779.3 181.02L780.79 178.43L782.31 175.83L783.85 173.23L785.42 170.64L787 168.04L788.61 165.45L790.24 162.85L791.89 160.25L793.57 157.66L795.26 155.06L796.98 152.47L798.71 149.87L800.47 147.28L802.24 144.68L804.04 142.09L805.85 139.49L807.68 136.9L809.53 134.3L811.4 131.71L813.29 129.12L815.19 126.52L817.11 123.93L819.04 121.33L820.99 118.74L822.96 116.15L824.94 113.55L826.94 110.96L828.95 108.37L830.97 105.78L833.01 103.19L835.06 100.59L837.13 98L839.2 95.41L841.29 92.82L843.39 90.24L845.5 87.65L847.62 85.06L849.75 82.47L851.88 79.89L854.03 77.31L856.19 74.72L858.35 72.14L860.52 69.56L862.69 66.99L864.87 64.42L867.05 61.85L869.23 59.28L871.42 56.72L873.6 54.17L875.78 51.63L877.94 49.1L880.1 46.59L882.22 44.11L884.3 41.66L886.31 39.28L888.17 37.01L889.74 34.94L890.62 33.29L889.9 32.46L886.39 32.81M924.43 34.18L928.47 36.1L933.3 38.3" stroke="#4ec36b" stroke-width="1.39" stroke-dasharray="1.39 2.29"/>
<path d="M745.4 266.4L747.33 264.24L749.28 262.08L751.25 259.92L753.24 257.77L755.25 255.62L757.28 253.47L759.32 251.33L761.38 249.19L763.46 247.06L765.56 244.93L767.67 242.8L769.8 240.68L771.94 238.57L774.1 236.46L776.28 234.36L778.46 232.26L780.66 230.17L782.88 228.08L785.1 226.01L787.34 223.93L789.59 221.87L791.85 219.81L794.13 217.76L796.41 215.72L798.7 213.69L801 211.66L803.31 209.64L805.63 207.64L807.96 205.64L810.29 203.65L812.63 201.67L814.98 199.71L817.33 197.75L819.68 195.81L822.05 193.87L824.41 191.95L826.78 190.05L829.16 188.15L831.53 186.27L833.91 184.41L836.29 182.56L838.67 180.72L841.06 178.91L843.44 177.1L845.82 175.32L848.2 173.55L850.59 171.81L852.97 170.08L855.35 168.37L857.73 166.68L860.1 165.02L862.48 163.38L864.85 161.76L867.22 160.16L869.58 158.6L871.95 157.05L874.3 155.54L876.66 154.05L879.01 152.59L881.36 151.17L883.71 149.77L886.05 148.41L888.39 147.08L890.73 145.78L893.06 144.52L895.39 143.3L897.72 142.12L900.05 140.98L902.38 139.87L904.71 138.81L907.04 137.8L909.37 136.82L911.7 135.9L914.04 135.02L916.38 134.18L918.72 133.4L921.08 132.67L923.44 131.99L925.81 131.36L928.19 130.78L930.58 130.26L932.99 129.8L935.41 129.39L937.84 129.03L940.3 128.74L942.77 128.5L945.27 128.32L947.78 128.2L950.32 128.13L952.89 128.13L955.48 128.18L958.1 128.3L960.75 128.47L963.42 128.7L966.13 128.99L968.88 129.33L971.65 129.73L974.46 130.19L977.3 130.7" stroke="#4ec36b" stroke-width="1.39" stroke-dasharray="1.39 2.29"/>
<path d="M750.5 268.1L752.24 266.33L753.99 264.57L755.75 262.81L757.53 261.05L759.31 259.29L761.11 257.54L762.92 255.79L764.74 254.04L766.58 252.3L768.42 250.56L770.28 248.83L772.14 247.1L774.01 245.37L775.9 243.65L777.79 241.93L779.69 240.22L781.61 238.51L783.53 236.81L785.45 235.11L787.39 233.42L789.33 231.73L791.29 230.05L793.24 228.37L795.21 226.7L797.18 225.04L799.16 223.38L801.15 221.73L803.14 220.09L805.13 218.45L807.13 216.82L809.14 215.2L811.15 213.58L813.17 211.97L815.18 210.37L817.21 208.78L819.23 207.2L821.26 205.63L823.3 204.06L825.33 202.51L827.37 200.96L829.41 199.42L831.45 197.9L833.49 196.38L835.54 194.88L837.58 193.39L839.63 191.9L841.68 190.43L843.73 188.98L845.78 187.53L847.82 186.1L849.87 184.68L851.92 183.28L853.97 181.88L856.01 180.51L858.06 179.15L860.1 177.8L862.14 176.47L864.18 175.15L866.22 173.86L868.26 172.58L870.3 171.31L872.33 170.07L874.37 168.84L876.4 167.63L878.43 166.45L880.46 165.28L882.48 164.13L884.5 163.01L886.53 161.9L888.55 160.82L890.57 159.76L892.58 158.73L894.6 157.72L896.62 156.73L898.63 155.77L900.65 154.83L902.66 153.92L904.67 153.04L906.69 152.19L908.7 151.36L910.72 150.56L912.74 149.79L914.76 149.06L916.78 148.35L918.81 147.67L920.83 147.02L922.87 146.41L924.9 145.83L926.95 145.28L929 144.76L931.05 144.28L933.11 143.84L935.18 143.42L937.26 143.05L939.35 142.71L941.44 142.4L943.55 142.13L945.67 141.9L947.8 141.7" stroke="#4ec36b" stroke-width="1.39" stroke-dasharray="1.39 2.29"/>
<path d="M752 272L752.26 270.82L752.53 269.64L752.8 268.45L753.08 267.27L753.36 266.09L753.65 264.91L753.95 263.73L754.25 262.55L754.56 261.36L754.87 260.18L755.19 259L755.51 257.82L755.85 256.64L756.18 255.45L756.53 254.27L756.88 253.09L757.23 251.91L757.59 250.73L757.96 249.55L758.33 248.36L758.71 247.18L759.09 246L759.48 244.82L759.88 243.64L760.28 242.45L760.68 241.27L761.1 240.09L761.51 238.91L761.94 237.73L762.37 236.55L762.8 235.36L763.24 234.18L763.69 233L764.14 231.82L764.6 230.64L765.06 229.45L765.53 228.27L766 227.09L766.48 225.91L766.97 224.73L767.46 223.55L767.95 222.36L768.45 221.18L768.96 220L769.47 218.82L769.99 217.64L770.51 216.45L771.04 215.27L771.57 214.09L772.11 212.91L772.65 211.73L773.2 210.55L773.75 209.36L774.31 208.18L774.88 207L775.45 205.82L776.02 204.64L776.6 203.45L777.18 202.27L777.77 201.09L778.37 199.91L778.97 198.73L779.57 197.55L780.18 196.36L780.79 195.18L781.41 194L782.04 192.82L782.67 191.64L783.3 190.45L783.94 189.27L784.58 188.09L785.23 186.91L785.88 185.73L786.54 184.55L787.2 183.36L787.86 182.18L788.54 181L789.21 179.82L789.89 178.64L790.58 177.45L791.26 176.27L791.96 175.09L792.66 173.91L793.36 172.73L794.06 171.55L794.78 170.36L795.49 169.18L796.21 168L796.93 166.82L797.66 165.64L798.39 164.45L799.13 163.27L799.87 162.09L800.62 160.91L801.36 159.73L802.12 158.55L802.87 157.36L803.64 156.18L804.4 155" stroke="#4ec36b" stroke-width="1.39" stroke-dasharray="1.39 2.29"/>
<path d="M808.7 239.6L808.36 237.94L808.03 236.28L807.71 234.62L807.4 232.96L807.09 231.3L806.79 229.64L806.49 227.99L806.21 226.34L805.93 224.69L805.66 223.04L805.39 221.39L805.13 219.75L804.88 218.1L804.64 216.46L804.4 214.82L804.17 213.18L803.94 211.55L803.73 209.91L803.52 208.28L803.31 206.65L803.11 205.03L802.92 203.4L802.74 201.78L802.56 200.16L802.39 198.55L802.23 196.94L802.07 195.33L801.92 193.72L801.77 192.11L801.63 190.51L801.49 188.92L801.37 187.32L801.24 185.73L801.13 184.14L801.01 182.56L800.91 180.98L800.81 179.41L800.71 177.84L800.62 176.27L800.53 174.71L800.45 173.15L800.37 171.59L800.3 170.05L800.23 168.5L800.17 166.96L800.11 165.43L800.05 163.9L800 162.38L799.95 160.87L799.9 159.36L799.85 157.85L799.81 156.36L799.77 154.87L799.73 153.39L799.69 151.91L799.65 150.44L799.62 148.98L799.58 147.53L799.54 146.09L799.51 144.66L799.47 143.23L799.43 141.82L799.39 140.41L799.35 139.02L799.3 137.63L799.25 136.26L799.2 134.9L799.14 133.55L799.07 132.21L799 130.89L798.93 129.58L798.84 128.28L798.75 127L798.65 125.73L798.54 124.48L798.41 123.24L798.28 122.03L798.13 120.82L797.97 119.64L797.79 118.48L797.59 117.33L797.38 116.21L797.14 115.11L796.89 114.03L796.61 112.97L796.31 111.94L795.99 110.93L795.64 109.95L795.25 108.99L794.84 108.06L794.4 107.16L793.92 106.29L793.4 105.45L792.84 104.64L792.24 103.86L791.6 103.12L790.92 102.41L790.18 101.74L789.4 101.1" stroke="#375a8c" stroke-width="1.39" stroke-dasharray="1.39 2.29"/>
<path d="M457.1 208.4L459.71 206.83L462.34 205.26L465.01 203.69L467.71 202.12L470.44 200.56L473.2 198.99L475.99 197.42L478.81 195.85L481.66 194.28L484.53 192.71L487.44 191.14L490.38 189.57L493.35 188L496.35 186.43L499.37 184.87L502.42 183.3L505.51 181.73L508.62 180.16L511.75 178.59L514.92 177.02L518.11 175.45L521.33 173.88L524.58 172.31L527.85 170.75L531.15 169.18L534.48 167.61L537.83 166.04L541.21 164.47L544.61 162.9L548.04 161.33L551.49 159.76L554.97 158.19L558.47 156.63L562 155.06L565.55 153.49L569.13 151.92L572.73 150.35L576.35 148.78L579.99 147.21L583.66 145.64L587.35 144.08L591.06 142.51L594.79 140.94L598.55 139.37L602.33 137.8L606.13 136.23L609.95 134.66L613.78 133.1L617.65 131.53L621.53 129.96L625.43 128.39L629.34 126.82L633.28 125.25L637.24 123.68L641.22 122.12L645.21 120.55L649.22 118.98L653.26 117.41L657.3 115.84L661.37 114.27L665.45 112.71L669.55 111.14L673.67 109.57L677.8 108L681.94 106.43L686.11 104.87L690.28 103.3L694.48 101.73L698.68 100.16L702.9 98.59L707.14 97.03L711.39 95.46L715.65 93.89L719.92 92.32L724.21 90.76L728.51 89.19L732.82 87.62L737.15 86.05L741.48 84.49L745.83 82.92L750.19 81.35L754.55 79.79L758.93 78.22L763.32 76.65L767.71 75.09L772.12 73.52L776.53 71.96L780.95 70.39L785.38 68.83L789.82 67.26L794.26 65.7L798.71 64.13L803.17 62.57L807.63 61L812.1 59.44L816.57 57.88L821.04 56.32L825.52 54.76L830 53.2" stroke="#2d708e" stroke-width="1.39" stroke-dasharray="1.39 2.29"/>
<path d="M756.53 273.5H763.47M760 270.03V276.97" stroke="#ff0000" stroke-width="1.39"/>
<path d="M762.03 270.5H768.97M765.5 267.03V273.97" stroke="#ff0000" stroke-width="1.39"/>
<path d="M749.78 274.75H756.72M753.25 271.28V278.22" stroke="#ff0000" stroke-width="1.39"/>
<path d="M739.78 274.5H746.72M743.25 271.03V277.97" stroke="#ff0000" stroke-width="1.39"/>
<path d="M741.93 266.4H748.87M745.4 262.93V269.87" stroke="#ff0000" stroke-width="1.39"/>
<path d="M747.03 268.1H753.97M750.5 264.63V271.57" stroke="#ff0000" stroke-width="1.39"/>
<path d="M748.53 272H755.47M752 268.53V275.47" stroke="#ff0000" stroke-width="1.39"/>
<path d="M805.23 239.6H812.17M808.7 236.13V243.07" stroke="#ff0000" stroke-width="1.39"/>
<path d="M453.63 208.4H460.57M457.1 204.93V211.87" stroke="#ff0000" stroke-width="1.39"/>
<path d="M776.29 273.41L776.45 272.56L776.59 271.72L776.69 270.88L776.77 270.03L776.83 269.2L776.85 268.36L776.85 267.53L776.83 266.71L776.77 265.89L776.69 265.09L776.58 264.29L776.44 263.5L776.28 262.72L776.09 261.96L775.87 261.2L775.62 260.47L775.35 259.74L775.05 259.03L774.72 258.34L774.37 257.67L774 257.02L773.59 256.38L773.17 255.77L772.71 255.18L772.24 254.6L771.74 254.06L771.21 253.53L770.66 253.03L770.09 252.55L769.5 252.1L768.89 251.68L768.25 251.28L767.6 250.91L766.92 250.57L766.23 250.25L765.52 249.97L764.79 249.71L764.04 249.48L763.28 249.28L762.5 249.11L761.71 248.98L760.9 248.87L760.08 248.79L759.26 248.75L758.42 248.73L757.57 248.75L756.71 248.79L755.84 248.87L754.97 248.98L754.09 249.11L753.21 249.28L752.33 249.48L751.44 249.71L750.55 249.97L749.67 250.25L748.78 250.57L747.9 250.91L747.02 251.28L746.15 251.68L745.28 252.1L744.42 252.55L743.57 253.03L742.73 253.53L741.9 254.06L741.08 254.6L740.28 255.18L739.49 255.77L738.72 256.38L737.96 257.02L737.23 257.67L736.51 258.34L735.81 259.03L735.14 259.74L734.48 260.47L733.85 261.2L733.25 261.96L732.66 262.72L732.11 263.5L731.58 264.29L731.08 265.09L730.61 265.89L730.17 266.71L729.76 267.53L729.37 268.36L729.02 269.2L728.7 270.03L728.41 270.88L728.16 271.72L727.93 272.56L727.74 273.41L727.58 274.25L727.46 275.09L727.37 275.93L727.31 276.77L727.29 277.6L727.29 278.42L727.34 279.24L727.41 280.05L727.52 280.85L727.66 281.64L727.83 282.42L728.04 283.18L728.27 283.94L728.54 284.68L728.84 285.41L729.17 286.12L729.53 286.82L729.92 287.5L730.33 288.16L730.78 288.81L731.25 289.44L731.74 290.04L732.26 290.63L732.81 291.19L733.38 291.74L733.97 292.26L734.59 292.75L735.23 293.23L735.88 293.68L736.56 294.1L737.25 294.5L737.96 294.88L738.69 295.23L739.43 295.55L740.19 295.84L740.96 296.11L741.75 296.35L742.54 296.57L743.34 296.75L744.16 296.91L744.98 297.04L745.81 297.14L746.64 297.21L747.48 297.25L748.32 297.27L749.17 297.25L750.02 297.21L750.86 297.14L751.71 297.04L752.56 296.91L753.41 296.75L754.25 296.57L755.09 296.35L755.92 296.11L756.75 295.84L757.57 295.55L758.39 295.23L759.19 294.88L759.99 294.5L760.78 294.1L761.55 293.68L762.32 293.23L763.07 292.75L763.81 292.26L764.53 291.74L765.24 291.19L765.93 290.63L766.61 290.04L767.27 289.44L767.92 288.81L768.54 288.16L769.15 287.5L769.74 286.82L770.3 286.12L770.85 285.41L771.38 284.68L771.88 283.94L772.36 283.18L772.82 282.42L773.26 281.64L773.67 280.85L774.06 280.05L774.43 279.24L774.77 278.42L775.09 277.6L775.38 276.77L775.65 275.93L775.89 275.09L776.1 274.25L776.29 273.41Z" stroke="#4ec36b" stroke-width="2.08"/>
<path d="M854.12 231.62L854.28 230.77L854.4 229.93L854.5 229.09L854.57 228.24L854.62 227.4L854.63 226.56L854.61 225.73L854.57 224.9L854.5 224.08L854.4 223.26L854.27 222.45L854.11 221.66L853.92 220.87L853.71 220.09L853.47 219.33L853.2 218.58L852.9 217.84L852.58 217.12L852.23 216.42L851.85 215.73L851.45 215.06L851.02 214.41L850.57 213.78L850.09 213.18L849.59 212.59L849.07 212.03L848.52 211.49L847.95 210.97L847.36 210.48L846.74 210.02L846.11 209.58L845.46 209.17L844.78 208.79L844.09 208.43L843.38 208.11L842.66 207.81L841.91 207.54L841.15 207.31L840.38 207.1L839.6 206.93L838.8 206.79L837.99 206.67L837.16 206.59L836.33 206.55L835.49 206.53L834.64 206.55L833.79 206.59L832.93 206.67L832.06 206.79L831.19 206.93L830.32 207.1L829.44 207.31L828.57 207.54L827.69 207.81L826.82 208.11L825.95 208.43L825.08 208.79L824.22 209.17L823.37 209.58L822.52 210.02L821.68 210.48L820.85 210.97L820.03 211.49L819.22 212.03L818.43 212.59L817.65 213.18L816.88 213.78L816.14 214.41L815.4 215.06L814.69 215.73L814 216.42L813.32 217.12L812.67 217.84L812.04 218.58L811.43 219.33L810.85 220.09L810.29 220.87L809.75 221.66L809.24 222.45L808.76 223.26L808.31 224.08L807.88 224.9L807.49 225.73L807.12 226.56L806.78 227.4L806.47 228.24L806.19 229.09L805.95 229.93L805.73 230.77L805.55 231.62L805.4 232.46L805.28 233.3L805.19 234.13L805.13 234.96L805.11 235.79L805.11 236.6L805.15 237.41L805.22 238.22L805.33 239.01L805.46 239.79L805.63 240.56L805.82 241.31L806.05 242.06L806.31 242.79L806.6 243.5L806.91 244.21L807.26 244.89L807.63 245.56L808.03 246.21L808.46 246.84L808.92 247.45L809.4 248.04L809.9 248.61L810.43 249.16L810.99 249.69L811.57 250.2L812.17 250.69L812.79 251.15L813.43 251.58L814.09 252L814.77 252.39L815.47 252.75L816.18 253.09L816.91 253.4L817.66 253.69L818.42 253.95L819.19 254.18L819.98 254.39L820.77 254.57L821.58 254.72L822.39 254.85L823.22 254.94L824.05 255.01L824.89 255.06L825.73 255.07L826.58 255.06L827.43 255.01L828.28 254.94L829.13 254.85L829.98 254.72L830.84 254.57L831.69 254.39L832.54 254.18L833.38 253.95L834.22 253.69L835.05 253.4L835.88 253.09L836.7 252.75L837.51 252.39L838.31 252L839.1 251.58L839.88 251.15L840.65 250.69L841.4 250.2L842.14 249.69L842.87 249.16L843.58 248.61L844.27 248.04L844.95 247.45L845.61 246.84L846.25 246.21L846.87 245.56L847.48 244.89L848.06 244.21L848.62 243.5L849.16 242.79L849.67 242.06L850.17 241.31L850.64 240.56L851.08 239.79L851.5 239.01L851.9 238.22L852.27 237.41L852.62 236.6L852.93 235.79L853.23 234.96L853.49 234.13L853.73 233.3L853.94 232.46L854.12 231.62Z" stroke="#375a8c" stroke-width="2.08"/>
<path d="M469.17 208.39L470.57 207.55L471.96 206.7L473.32 205.86L474.66 205.01L475.99 204.17L477.28 203.33L478.55 202.49L479.79 201.66L481.01 200.83L482.19 200.01L483.34 199.2L484.45 198.4L485.52 197.6L486.56 196.82L487.56 196.05L488.51 195.29L489.43 194.55L490.29 193.82L491.11 193.1L491.88 192.41L492.6 191.73L493.26 191.07L493.88 190.43L494.43 189.81L494.93 189.22L495.37 188.64L495.76 188.09L496.08 187.57L496.34 187.07L496.53 186.6L496.66 186.15L496.73 185.73L496.73 185.34L496.66 184.98L496.53 184.64L496.33 184.34L496.06 184.07L495.72 183.83L495.31 183.62L494.83 183.44L494.29 183.29L493.68 183.18L493 183.1L492.25 183.05L491.44 183.03L490.56 183.05L489.62 183.1L488.62 183.18L487.55 183.29L486.43 183.44L485.24 183.62L484 183.83L482.71 184.07L481.36 184.34L479.96 184.64L478.52 184.98L477.03 185.34L475.49 185.73L473.91 186.15L472.3 186.6L470.65 187.07L468.97 187.57L467.26 188.09L465.52 188.64L463.76 189.22L461.98 189.81L460.18 190.43L458.36 191.07L456.53 191.73L454.7 192.41L452.86 193.1L451.01 193.82L449.17 194.55L447.33 195.29L445.5 196.05L443.67 196.82L441.86 197.6L440.07 198.4L438.29 199.2L436.53 200.01L434.79 200.83L433.08 201.66L431.4 202.49L429.74 203.33L428.12 204.17L426.53 205.01L424.98 205.86L423.47 206.7L422 207.55L420.57 208.39L419.18 209.23L417.84 210.06L416.54 210.9L415.29 211.72L414.1 212.54L412.95 213.36L411.85 214.16L410.8 214.95L409.81 215.74L408.87 216.51L407.99 217.28L407.16 218.03L406.38 218.76L405.66 219.49L405 220.19L404.39 220.88L403.84 221.56L403.34 222.22L402.91 222.86L402.52 223.48L402.19 224.08L401.92 224.67L401.71 225.23L401.54 225.77L401.44 226.29L401.38 226.79L401.38 227.27L401.44 227.72L401.54 228.15L401.7 228.56L401.9 228.94L402.16 229.3L402.47 229.63L402.82 229.94L403.22 230.22L403.67 230.47L404.16 230.7L404.7 230.9L405.29 231.08L405.91 231.23L406.58 231.35L407.29 231.45L408.04 231.51L408.83 231.56L409.65 231.57L410.51 231.56L411.41 231.51L412.35 231.45L413.32 231.35L414.32 231.23L415.35 231.08L416.41 230.9L417.51 230.7L418.63 230.47L419.78 230.22L420.96 229.94L422.16 229.63L423.39 229.3L424.64 228.94L425.92 228.56L427.22 228.15L428.53 227.72L429.87 227.27L431.22 226.79L432.6 226.29L433.98 225.77L435.39 225.23L436.81 224.67L438.24 224.08L439.68 223.48L441.14 222.86L442.6 222.22L444.07 221.56L445.55 220.88L447.04 220.19L448.53 219.49L450.02 218.76L451.52 218.03L453.01 217.28L454.51 216.51L456.01 215.74L457.5 214.95L458.99 214.16L460.47 213.36L461.95 212.54L463.42 211.72L464.87 210.9L466.32 210.06L467.75 209.23L469.17 208.39Z" stroke="#2d708e" stroke-width="2.08"/>
<path d="M825.6 51.64L826.94 51.65L828.05 51.75L828.92 51.92L829.57 52.17L830 52.5" stroke="#666666" stroke-width="1.39"/>
<path d="M891.3 47.5L893.04 46.63L894.73 45.86L896.38 45.18L898 44.62L899.58 44.17L901.15 43.87L902.7 43.7L904.16 43.66L905.64 43.74L907.15 43.95L908.68 44.29L910.26 44.74L911.89 45.3L913.57 45.96L915.3 46.7" stroke="#666666" stroke-width="1.39"/>
<path d="M891.3 47.7L892.58 48.11L893.81 48.62L895 49.23L896.16 49.93L897.3 50.7L898.39 51.59L899.48 52.54L900.55 53.54L901.63 54.6L902.7 55.7L903.7 55.98L904.7 56.3" stroke="#666666" stroke-width="1.39"/>
<path d="M897.3 55.3L898.79 55.68L900.28 56.13L901.76 56.67L903.24 57.28L904.71 57.96L906.2 58.71L907.69 59.52L909.19 60.38L910.7 61.3" stroke="#666666" stroke-width="1.39"/>
<path d="M864 58.7L865.87 58.4L867.66 58.17L869.36 58.01L870.98 57.93L872.53 57.93L874 58" stroke="#666666" stroke-width="1.39"/>
<path d="M870.7 74.5L872.6 73.66L874.48 72.85L876.33 72.09L878.16 71.37L879.96 70.7L881.74 70.07L883.5 69.5" stroke="#666666" stroke-width="1.39"/>
<path d="M838 80.7L839.96 80.25L841.88 79.84L843.75 79.47L845.58 79.14L847.36 78.85L849.11 78.6L850.81 78.39L852.46 78.23L854.08 78.1L855.66 78.03L857.2 77.99L858.7 78" stroke="#666666" stroke-width="1.39"/>
<path d="M871 82.7L872.65 82.38L874.28 82.1L875.89 81.86L877.49 81.66L879.06 81.49L880.62 81.37L882.16 81.29L883.69 81.25L885.2 81.26L886.7 81.3L888.19 81.32L889.68 81.38L891.15 81.49L892.61 81.63L894.07 81.81L895.53 82.03L896.97 82.29L898.42 82.59L899.86 82.93L901.3 83.3L902.81 83.8L904.31 84.33L905.82 84.9L907.33 85.51L908.84 86.16L910.35 86.84L911.87 87.55L913.4 88.29L914.93 89.06L916.46 89.87L918 90.7L919.45 91.59L920.9 92.51L922.35 93.45L923.82 94.4L925.28 95.38L926.76 96.38L928.23 97.39L929.72 98.42L931.21 99.47L932.7 100.53L934.2 101.61L935.7 102.7" stroke="#666666" stroke-width="1.39"/>
<path d="M871.3 86L872.64 86.31L873.97 86.66L875.28 87.04L876.57 87.46L877.85 87.91L879.12 88.4L880.38 88.91L881.62 89.46L882.86 90.05L884.08 90.66L885.3 91.3L886.52 91.89L887.73 92.5L888.94 93.14L890.15 93.81L891.35 94.5L892.54 95.21L893.74 95.95L894.93 96.71L896.11 97.5L897.3 98.3L898.5 99.06L899.7 99.83L900.9 100.63L902.1 101.45L903.3 102.28L904.5 103.13L905.7 104" stroke="#666666" stroke-width="1.39"/>
<path d="M776.7 107.2L779.08 106.35L781.44 105.52L783.78 104.7L786.1 103.9" stroke="#666666" stroke-width="1.39"/>
<path d="M842.2 115L843.09 113.66L843.99 112.32L844.89 110.98L845.79 109.64L846.7 108.3" stroke="#666666" stroke-width="1.39"/>
<path d="M905 145L904.44 146.34L903.89 147.67L903.33 149.02L902.77 150.36L902.21 151.7L901.66 153.05L901.1 154.4" stroke="#666666" stroke-width="1.39"/>
<path d="M963 129L961.57 127.56L960.13 126.13L958.69 124.7L957.25 123.28L955.82 121.86L954.38 120.44L952.94 119.04L951.5 117.63L950.06 116.23L948.62 114.84L947.18 113.45L945.74 112.07L944.3 110.7" stroke="#666666" stroke-width="1.39"/>
<path d="M958.3 70L955.86 68.99L953.46 68.02L951.1 67.08L948.78 66.18L946.51 65.32L944.29 64.5L942.12 63.72L940 63" stroke="#666666" stroke-width="1.39"/>
<path d="M1008.7 100.7L1006.04 99.31L1003.39 97.93L1000.74 96.56L998.1 95.2L995.46 93.84L992.83 92.5L990.22 91.16L987.61 89.84L985.02 88.53L982.43 87.23L979.86 85.95L977.31 84.68L974.77 83.42L972.25 82.18L969.74 80.96L967.26 79.76L964.8 78.58L962.36 77.42L959.95 76.28L957.56 75.17L955.2 74.08L952.87 73.02L950.57 72L948.3 71" stroke="#666666" stroke-width="1.39"/>
<path d="M832.3 82.7L833.06 81.54L833.81 80.39L834.55 79.25L835.28 78.12L836 77" stroke="#4ec36b" stroke-width="1.39"/>
<path d="M897.7 76L898.9 74.82L900.1 73.66L901.3 72.54L902.49 71.44L903.69 70.37L904.89 69.34L906.09 68.34L907.29 67.39L908.5 66.47L909.71 65.6L910.93 64.78L912.17 64.02L913.42 63.3L914.69 62.65L915.97 62.06L917.29 61.53L918.63 61.07L920 60.68L921.42 60.36L922.87 60.12L924.38 59.96L925.93 59.87L927.54 59.87L929.21 59.94L930.94 60.09L932.74 60.32L934.61 60.62L936.55 61L938.56 61.44L940.64 61.96L942.79 62.54L945.01 63.19L947.3 63.89L949.65 64.65L952.07 65.46L954.55 66.32L957.09 67.23L959.68 68.17L962.33 69.16L965.03 70.19L967.78 71.25L970.57 72.34L973.4 73.47L976.28 74.62L979.19 75.79L982.13 77L985.1 78.22L988.11 79.46L991.14 80.73L994.19 82.01L997.27 83.3L1000.37 84.62L1003.49 85.95L1006.62 87.29L1009.77 88.64L1012.94 90.01L1016.12 91.38L1019.31 92.77L1022.51 94.17L1025.71 95.58L1028.93 96.99L1032.15 98.42L1035.38 99.85L1038.62 101.29L1041.85 102.73L1045.09 104.18L1048.34 105.64L1051.58 107.1L1054.82 108.57L1058.06 110.04L1061.3 111.52L1064.54 113.01L1067.78 114.49L1071.01 115.99L1074.24 117.48L1077.47 118.98L1080.69 120.48L1083.9 121.99L1087.11 123.5L1090.31 125.01L1093.51 126.53L1096.69 128.05L1099.87 129.57L1103.04 131.09L1106.2 132.62L1109.35 134.14L1112.49 135.67L1115.62 137.21L1118.74 138.74L1121.85 140.28L1124.94 141.82L1128.03 143.36L1131.1 144.9" stroke="#4ec36b" stroke-width="1.39"/>
<path d="M908 63L909.14 62.21L910.28 61.46L911.44 60.76L912.61 60.12L913.79 59.53L915 59" stroke="#4ec36b" stroke-width="1.39"/>
<path d="M933.3 38.3L936.07 39.6L938.96 40.95L941.94 42.33L944.97 43.73L948.05 45.15L951.16 46.59L954.3 48.03L957.45 49.49L960.62 50.95L963.81 52.42L967 53.9" stroke="#4ec36b" stroke-width="1.39"/>
<path d="M977.3 130.7L979.11 131.06L980.93 131.45L982.76 131.86L984.61 132.28L986.47 132.73L988.34 133.2L990.23 133.69L992.14 134.19L994.05 134.72L995.98 135.27L997.93 135.83L999.88 136.41L1001.85 137.01L1003.83 137.63L1005.83 138.27L1007.84 138.92L1009.86 139.59L1011.9 140.28L1013.94 140.98L1016 141.7" stroke="#4ec36b" stroke-width="1.39"/>
<path d="M947.8 141.7L949.35 141.55L950.9 141.42L952.47 141.31L954.04 141.22L955.61 141.15L957.2 141.1" stroke="#4ec36b" stroke-width="1.39"/>
<path d="M804.4 155L805.45 153.41L806.51 151.81L807.58 150.22L808.65 148.63L809.73 147.03L810.82 145.44L811.92 143.85L813.02 142.25L814.12 140.66L815.24 139.07L816.36 137.47L817.48 135.88L818.62 134.29L819.76 132.69L820.9 131.1" stroke="#4ec36b" stroke-width="1.39"/>
<path d="M789.4 101.1L788.55 100.63L787.65 100.19L786.71 99.78L785.72 99.4L784.68 99.05L783.59 98.74L782.45 98.46L781.25 98.21L780 98" stroke="#375a8c" stroke-width="1.39"/>
<path d="M830 53.2L834.46 51.63L838.92 50.06L843.39 48.49L847.85 46.92L852.32 45.35L856.78 43.78L861.24 42.22L865.7 40.65L870.15 39.1L874.59 37.54L879 36" stroke="#2d708e" stroke-width="1.39"/>
<path d="M834.85 77H837.15M836 75.85V78.15" stroke="#ff6347" stroke-width="1.35"/>
<path d="M1129.95 144.9H1132.25M1131.1 143.75V146.05" stroke="#ff6347" stroke-width="1.35"/>
<path d="M913.85 59H916.15M915 57.85V60.15" stroke="#ff6347" stroke-width="1.35"/>
<path d="M965.85 53.9H968.15M967 52.75V55.05" stroke="#ff6347" stroke-width="1.35"/>
<path d="M1014.85 141.7H1017.15M1016 140.55V142.85" stroke="#ff6347" stroke-width="1.35"/>
<path d="M956.05 141.1H958.35M957.2 139.95V142.25" stroke="#ff6347" stroke-width="1.35"/>
<path d="M819.75 131.1H822.05M820.9 129.95V132.25" stroke="#ff6347" stroke-width="1.35"/>
<path d="M778.85 98H781.15M780 96.85V99.15" stroke="#ff6347" stroke-width="1.35"/>
<path d="M877.85 36H880.15M879 34.85V37.15" stroke="#ff6347" stroke-width="1.35"/>
</g>
<g font-family="'DejaVu Sans', 'Liberation Sans', sans-serif" font-size="10.6px" fill="#ffffff" stroke="none" text-anchor="middle">
<text transform="translate(751.8 276.9) scale(0.955 1)">STA</text>
<text transform="translate(829.7 233.8) scale(0.955 1)">AND</text>
<text transform="translate(446.4 211.1) scale(0.955 1)">LMI</text>
</g>
</g>
<g font-family="'DejaVu Sans', 'Liberation Sans', sans-serif" font-size="9.72px" fill="#808080">
<text x="902.9" y="623.48" text-anchor="middle">−90<tspan dx="0.4" dy="-5.3" font-size="7.2px" fill-opacity="0.85">&#8728;</tspan></text>
<text x="902.9" y="525.76" text-anchor="middle">−60<tspan dx="0.4" dy="-5.3" font-size="7.2px" fill-opacity="0.85">&#8728;</tspan></text>
<text x="902.9" y="428.03" text-anchor="middle">−30<tspan dx="0.4" dy="-5.3" font-size="7.2px" fill-opacity="0.85">&#8728;</tspan></text>
<text x="902.9" y="330.3" text-anchor="middle">+0<tspan dx="0.4" dy="-5.3" font-size="7.2px" fill-opacity="0.85">&#8728;</tspan></text>
<text x="902.9" y="220.37" text-anchor="middle">+30<tspan dx="0.4" dy="-5.3" font-size="7.2px" fill-opacity="0.85">&#8728;</tspan></text>
<text x="902.9" y="122.64" text-anchor="middle">+60<tspan dx="0.4" dy="-5.3" font-size="7.2px" fill-opacity="0.85">&#8728;</tspan></text>
<text x="902.9" y="24.92" text-anchor="middle">+90<tspan dx="0.4" dy="-5.3" font-size="7.2px" fill-opacity="0.85">&#8728;</tspan></text>
<text x="902.9" y="330.3" text-anchor="middle">+0<tspan dx="0.4" dy="-5.3" font-size="7.2px" fill-opacity="0.85">&#8728;</tspan></text>
<text x="805.17" y="330.3" text-anchor="middle">+30<tspan dx="0.4" dy="-5.3" font-size="7.2px" fill-opacity="0.85">&#8728;</tspan></text>
<text x="707.44" y="330.3" text-anchor="middle">+60<tspan dx="0.4" dy="-5.3" font-size="7.2px" fill-opacity="0.85">&#8728;</tspan></text>
<text x="609.72" y="330.3" text-anchor="middle">+90<tspan dx="0.4" dy="-5.3" font-size="7.2px" fill-opacity="0.85">&#8728;</tspan></text>
<text x="511.99" y="330.3" text-anchor="middle">+120<tspan dx="0.4" dy="-5.3" font-size="7.2px" fill-opacity="0.85">&#8728;</tspan></text>
<text x="414.26" y="330.3" text-anchor="middle">+150<tspan dx="0.4" dy="-5.3" font-size="7.2px" fill-opacity="0.85">&#8728;</tspan></text>
<text x="316.53" y="330.3" text-anchor="middle">+180<tspan dx="0.4" dy="-5.3" font-size="7.2px" fill-opacity="0.85">&#8728;</tspan></text>
<text x="1489.27" y="330.3" text-anchor="middle">+180<tspan dx="0.4" dy="-5.3" font-size="7.2px" fill-opacity="0.85">&#8728;</tspan></text>
<text x="1391.54" y="330.3" text-anchor="middle">+210<tspan dx="0.4" dy="-5.3" font-size="7.2px" fill-opacity="0.85">&#8728;</tspan></text>
<text x="1293.81" y="330.3" text-anchor="middle">+240<tspan dx="0.4" dy="-5.3" font-size="7.2px" fill-opacity="0.85">&#8728;</tspan></text>
<text x="1196.08" y="330.3" text-anchor="middle">+270<tspan dx="0.4" dy="-5.3" font-size="7.2px" fill-opacity="0.85">&#8728;</tspan></text>
<text x="1098.36" y="330.3" text-anchor="middle">+300<tspan dx="0.4" dy="-5.3" font-size="7.2px" fill-opacity="0.85">&#8728;</tspan></text>
<text x="1000.63" y="330.3" text-anchor="middle">+330<tspan dx="0.4" dy="-5.3" font-size="7.2px" fill-opacity="0.85">&#8728;</tspan></text>
</g>
<g font-family="'DejaVu Sans Mono', 'Liberation Mono', monospace" font-size="13.93px" fill="#ffffff" style="white-space:pre">
<text x="316.03" y="29.6">CA000E</text>
<text x="316.03" y="42.6">Beg: 20251029 23:00:06 (sol = 216.42°)</text>
<text x="316.03" y="56.4">End: 20251030 09:36:27 (sol = 216.87°)</text>
<text x="316.03" y="68.5">--------------------------------------</text>
<text x="316.03" y="81.6">...: 17</text>
<text x="316.03" y="95">STA: 7</text>
<text x="316.03" y="108">AND: 1</text>
<text x="316.03" y="121.6">LMI: 1</text>
</g>
<g clip-path="url(#actclip)">
</g>
<g font-family="'DejaVu Sans', 'Liberation Sans', sans-serif" font-size="27.78px" fill="#ffffff" fill-opacity="0.3">
<text transform="translate(1468.9 641) rotate(-90) scale(0.975 1.03)" text-anchor="end" x="0" y="0">JAN</text>
<text transform="translate(1628 646) rotate(-90) scale(0.975 1.03)" text-anchor="end" x="0" y="0">FEB</text>
<text transform="translate(1765.8 644.6) rotate(-90) scale(0.975 1.03)" text-anchor="end" x="0" y="0">MAR</text>
<text transform="translate(149.1 643.1) rotate(-90) scale(0.975 1.03)" text-anchor="end" x="0" y="0">APR</text>
<text transform="translate(295 645.2) rotate(-90) scale(0.975 1.03)" text-anchor="end" x="0" y="0">MAY</text>
<text transform="translate(435.8 641.3) rotate(-90) scale(0.975 1.03)" text-anchor="end" x="0" y="0">JUN</text>
<text transform="translate(576.7 642) rotate(-90) scale(0.975 1.03)" text-anchor="end" x="0" y="0">JUL</text>
<text transform="translate(723.9 642.7) rotate(-90) scale(0.975 1.03)" text-anchor="end" x="0" y="0">AUG</text>
<text transform="translate(872 644.2) rotate(-90) scale(0.975 1.03)" text-anchor="end" x="0" y="0">SEP</text>
<text transform="translate(1016.8 644.1) rotate(-90) scale(0.975 1.03)" text-anchor="end" x="0" y="0">OCT</text>
<text transform="translate(1170 645.6) rotate(-90) scale(0.975 1.03)" text-anchor="end" x="0" y="0">NOV</text>
<text transform="translate(1319.1 645) rotate(-90) scale(0.975 1.03)" text-anchor="end" x="0" y="0">DEC</text>
</g>
<g clip-path="url(#actclip)">
<path d="M1081.57 843.5V641.5" stroke="#ff0000" stroke-width="1.39" stroke-dasharray="5.14 2.22" fill="none"/>
<path d="M1083.78 843.5V641.5" stroke="#ff0000" stroke-width="1.39" stroke-dasharray="5.14 2.22" fill="none"/>
<path d="M108.41 834H128.02" stroke="#bddf26" stroke-width="4.17" stroke-linecap="square" fill="none"/>
<path d="M167.24 834H343.75" stroke="#bddf26" stroke-width="4.17" stroke-linecap="square" fill="none"/>
<path d="M368.27 834H623.23" stroke="#bddf26" stroke-width="4.17" stroke-linecap="square" fill="none"/>
<path d="M637.94 834H785.03" stroke="#bddf26" stroke-width="4.17" stroke-linecap="square" fill="none"/>
<path d="M809.54 834H897.8" stroke="#bddf26" stroke-width="4.17" stroke-linecap="square" fill="none"/>
<path d="M922.31 834H971.34" stroke="#bddf26" stroke-width="4.17" stroke-linecap="square" fill="none"/>
<path d="M986.05 834H1064.5" stroke="#bddf26" stroke-width="4.17" stroke-linecap="square" fill="none"/>
<path d="M1084.11 834H1201.79" stroke="#bddf26" stroke-width="4.17" stroke-linecap="square" fill="none"/>
<path d="M1245.91 834H1324.36" stroke="#bddf26" stroke-width="4.17" stroke-linecap="square" fill="none"/>
<path d="M1339.07 834H1353.78" stroke="#bddf26" stroke-width="4.17" stroke-linecap="square" fill="none"/>
<path d="M1383.2 834H1442.04" stroke="#bddf26" stroke-width="4.17" stroke-linecap="square" fill="none"/>
<path d="M1461.65 834H1510.68" stroke="#bddf26" stroke-width="4.17" stroke-linecap="square" fill="none"/>
<path d="M1525.39 834H1545" stroke="#bddf26" stroke-width="4.17" stroke-linecap="square" fill="none"/>
<path d="M1726.41 834H1746.03" stroke="#bddf26" stroke-width="4.17" stroke-linecap="square" fill="none"/>
<path d="M1760.73 834H1780.35" stroke="#bddf26" stroke-width="4.17" stroke-linecap="square" fill="none"/>
<path d="M167.24 818H186.85" stroke="#81d34d" stroke-width="4.17" stroke-linecap="square" fill="none"/>
<path d="M226.08 818H284.91" stroke="#81d34d" stroke-width="4.17" stroke-linecap="square" fill="none"/>
<path d="M314.33 818H338.85" stroke="#81d34d" stroke-width="4.17" stroke-linecap="square" fill="none"/>
<path d="M368.27 818H490.84" stroke="#81d34d" stroke-width="4.17" stroke-linecap="square" fill="none"/>
<path d="M510.46 818H652.64" stroke="#81d34d" stroke-width="4.17" stroke-linecap="square" fill="none"/>
<path d="M706.58 818H736" stroke="#81d34d" stroke-width="4.17" stroke-linecap="square" fill="none"/>
<path d="M775.22 818H843.86" stroke="#81d34d" stroke-width="4.17" stroke-linecap="square" fill="none"/>
<path d="M873.28 818H986.05" stroke="#81d34d" stroke-width="4.17" stroke-linecap="square" fill="none"/>
<path d="M1005.66 818H1015.47" stroke="#81d34d" stroke-width="4.17" stroke-linecap="square" fill="none"/>
<path d="M1064.5 818H1211.59" stroke="#81d34d" stroke-width="4.17" stroke-linecap="square" fill="none"/>
<path d="M1245.91 818H1265.53" stroke="#81d34d" stroke-width="4.17" stroke-linecap="square" fill="none"/>
<path d="M1294.94 818H1314.56" stroke="#81d34d" stroke-width="4.17" stroke-linecap="square" fill="none"/>
<path d="M1343.98 818H1363.59" stroke="#81d34d" stroke-width="4.17" stroke-linecap="square" fill="none"/>
<path d="M1388.1 818H1427.33" stroke="#81d34d" stroke-width="4.17" stroke-linecap="square" fill="none"/>
<path d="M1461.65 818H1481.26" stroke="#81d34d" stroke-width="4.17" stroke-linecap="square" fill="none"/>
<path d="M1549.9 818H1569.52" stroke="#81d34d" stroke-width="4.17" stroke-linecap="square" fill="none"/>
<path d="M167.24 802H186.85" stroke="#4ec36b" stroke-width="4.17" stroke-linecap="square" fill="none"/>
<path d="M260.4 802H485.94" stroke="#4ec36b" stroke-width="4.17" stroke-linecap="square" fill="none"/>
<path d="M510.46 802H613.42" stroke="#4ec36b" stroke-width="4.17" stroke-linecap="square" fill="none"/>
<path d="M628.13 802H716.38" stroke="#4ec36b" stroke-width="4.17" stroke-linecap="square" fill="none"/>
<path d="M731.09 802H824.25" stroke="#4ec36b" stroke-width="4.17" stroke-linecap="square" fill="none"/>
<path d="M951.73 802H1147.85" stroke="#4ec36b" stroke-width="4.17" stroke-linecap="square" fill="none"/>
<path d="M1162.56 802H1245.91" stroke="#4ec36b" stroke-width="4.17" stroke-linecap="square" fill="none"/>
<path d="M1260.62 802H1442.04" stroke="#4ec36b" stroke-width="4.17" stroke-linecap="square" fill="none"/>
<path d="M1461.65 802H1481.26" stroke="#4ec36b" stroke-width="4.17" stroke-linecap="square" fill="none"/>
<path d="M1554.81 802H1574.42" stroke="#4ec36b" stroke-width="4.17" stroke-linecap="square" fill="none"/>
<path d="M196.66 785H216.27" stroke="#2ab07f" stroke-width="4.17" stroke-linecap="square" fill="none"/>
<path d="M324.14 785H505.55" stroke="#2ab07f" stroke-width="4.17" stroke-linecap="square" fill="none"/>
<path d="M520.26 785H539.87" stroke="#2ab07f" stroke-width="4.17" stroke-linecap="square" fill="none"/>
<path d="M559.49 785H682.06" stroke="#2ab07f" stroke-width="4.17" stroke-linecap="square" fill="none"/>
<path d="M809.54 785H829.15" stroke="#2ab07f" stroke-width="4.17" stroke-linecap="square" fill="none"/>
<path d="M956.63 785H971.34" stroke="#2ab07f" stroke-width="4.17" stroke-linecap="square" fill="none"/>
<path d="M990.96 785H1123.34" stroke="#2ab07f" stroke-width="4.17" stroke-linecap="square" fill="none"/>
<path d="M1157.66 785H1216.5" stroke="#2ab07f" stroke-width="4.17" stroke-linecap="square" fill="none"/>
<path d="M1245.91 785H1265.53" stroke="#2ab07f" stroke-width="4.17" stroke-linecap="square" fill="none"/>
<path d="M1319.46 785H1339.07" stroke="#2ab07f" stroke-width="4.17" stroke-linecap="square" fill="none"/>
<path d="M1397.91 785H1417.52" stroke="#2ab07f" stroke-width="4.17" stroke-linecap="square" fill="none"/>
<path d="M1466.55 785H1647.96" stroke="#2ab07f" stroke-width="4.17" stroke-linecap="square" fill="none"/>
<path d="M343.75 769H368.27" stroke="#1e9b8a" stroke-width="4.17" stroke-linecap="square" fill="none"/>
<path d="M412.39 769H446.72" stroke="#1e9b8a" stroke-width="4.17" stroke-linecap="square" fill="none"/>
<path d="M471.23 769H490.84" stroke="#1e9b8a" stroke-width="4.17" stroke-linecap="square" fill="none"/>
<path d="M530.07 769H544.78" stroke="#1e9b8a" stroke-width="4.17" stroke-linecap="square" fill="none"/>
<path d="M564.39 769H588.9" stroke="#1e9b8a" stroke-width="4.17" stroke-linecap="square" fill="none"/>
<path d="M618.32 769H647.74" stroke="#1e9b8a" stroke-width="4.17" stroke-linecap="square" fill="none"/>
<path d="M961.54 769H986.05" stroke="#1e9b8a" stroke-width="4.17" stroke-linecap="square" fill="none"/>
<path d="M1064.5 769H1084.11" stroke="#1e9b8a" stroke-width="4.17" stroke-linecap="square" fill="none"/>
<path d="M1103.73 769H1123.34" stroke="#1e9b8a" stroke-width="4.17" stroke-linecap="square" fill="none"/>
<path d="M1162.56 769H1191.98" stroke="#1e9b8a" stroke-width="4.17" stroke-linecap="square" fill="none"/>
<path d="M1250.82 769H1270.43" stroke="#1e9b8a" stroke-width="4.17" stroke-linecap="square" fill="none"/>
<path d="M1427.33 769H1510.68" stroke="#1e9b8a" stroke-width="4.17" stroke-linecap="square" fill="none"/>
<path d="M422.2 752H441.81" stroke="#25858e" stroke-width="4.17" stroke-linecap="square" fill="none"/>
<path d="M534.97 752H554.58" stroke="#25858e" stroke-width="4.17" stroke-linecap="square" fill="none"/>
<path d="M569.29 752H588.9" stroke="#25858e" stroke-width="4.17" stroke-linecap="square" fill="none"/>
<path d="M623.23 752H740.9" stroke="#25858e" stroke-width="4.17" stroke-linecap="square" fill="none"/>
<path d="M971.34 752H1133.14" stroke="#25858e" stroke-width="4.17" stroke-linecap="square" fill="none"/>
<path d="M1187.08 752H1343.98" stroke="#25858e" stroke-width="4.17" stroke-linecap="square" fill="none"/>
<path d="M1471.45 752H1491.07" stroke="#25858e" stroke-width="4.17" stroke-linecap="square" fill="none"/>
<path d="M432.01 736H451.62" stroke="#2d708e" stroke-width="4.17" stroke-linecap="square" fill="none"/>
<path d="M579.1 736H731.09" stroke="#2d708e" stroke-width="4.17" stroke-linecap="square" fill="none"/>
<path d="M995.86 736H1103.73" stroke="#2d708e" stroke-width="4.17" stroke-linecap="square" fill="none"/>
<path d="M1118.43 736H1221.4" stroke="#2d708e" stroke-width="4.17" stroke-linecap="square" fill="none"/>
<path d="M1265.53 736H1290.04" stroke="#2d708e" stroke-width="4.17" stroke-linecap="square" fill="none"/>
<path d="M1491.07 736H1510.68" stroke="#2d708e" stroke-width="4.17" stroke-linecap="square" fill="none"/>
<path d="M593.81 720H613.42" stroke="#375a8c" stroke-width="4.17" stroke-linecap="square" fill="none"/>
<path d="M657.55 720H770.32" stroke="#375a8c" stroke-width="4.17" stroke-linecap="square" fill="none"/>
<path d="M1074.31 720H1241.01" stroke="#375a8c" stroke-width="4.17" stroke-linecap="square" fill="none"/>
<path d="M1265.53 720H1285.14" stroke="#375a8c" stroke-width="4.17" stroke-linecap="square" fill="none"/>
<path d="M598.71 703H731.09" stroke="#424086" stroke-width="4.17" stroke-linecap="square" fill="none"/>
<path d="M1093.92 703H1118.43" stroke="#424086" stroke-width="4.17" stroke-linecap="square" fill="none"/>
<path d="M1201.79 703H1221.4" stroke="#424086" stroke-width="4.17" stroke-linecap="square" fill="none"/>
<path d="M1275.33 703H1324.36" stroke="#424086" stroke-width="4.17" stroke-linecap="square" fill="none"/>
<path d="M1113.53 687H1133.14" stroke="#482475" stroke-width="4.17" stroke-linecap="square" fill="none"/>
</g>
<g font-family="'DejaVu Sans', 'Liberation Sans', sans-serif" font-size="10.6px" fill="#ffffff" text-anchor="middle">
<text transform="translate(118.01 832) scale(0.955 1)">KSE</text>
<text transform="translate(255.3 832) scale(0.955 1)">ETA</text>
<text transform="translate(495.55 832) scale(0.955 1)">NZC</text>
<text transform="translate(711.28 832) scale(0.955 1)">NDA</text>
<text transform="translate(853.47 832) scale(0.955 1)">SPE</text>
<text transform="translate(946.63 832) scale(0.955 1)">ARD</text>
<text transform="translate(1025.08 832) scale(0.955 1)">EGE</text>
<text transform="translate(1142.75 832) scale(0.955 1)">NTA</text>
<text transform="translate(1284.94 832) scale(0.955 1)">MON</text>
<text transform="translate(1343.78 832) scale(0.955 1)">URS</text>
<text transform="translate(1412.42 832) scale(0.955 1)">AHY</text>
<text transform="translate(1485.96 832) scale(0.955 1)">GUM</text>
<text transform="translate(1534.99 832) scale(0.955 1)">OHY</text>
<text transform="translate(1736.02 832) scale(0.955 1)">XHE</text>
<text transform="translate(1770.34 832) scale(0.955 1)">EVI</text>
<text transform="translate(176.85 815.91) scale(0.955 1)">AVB</text>
<text transform="translate(255.3 815.91) scale(0.955 1)">ELY</text>
<text transform="translate(323.94 815.91) scale(0.955 1)">CAM</text>
<text transform="translate(431.81 815.91) scale(0.955 1)">SSG</text>
<text transform="translate(578.9 815.91) scale(0.955 1)">PCA</text>
<text transform="translate(721.09 815.91) scale(0.955 1)">AUD</text>
<text transform="translate(809.34 815.91) scale(0.955 1)">AUR</text>
<text transform="translate(931.92 815.91) scale(0.955 1)">DSX</text>
<text transform="translate(1010.37 815.91) scale(0.955 1)">OCU</text>
<text transform="translate(1137.85 815.91) scale(0.955 1)">OER</text>
<text transform="translate(1255.52 815.91) scale(0.955 1)">DKD</text>
<text transform="translate(1304.55 815.91) scale(0.955 1)">DSV</text>
<text transform="translate(1353.58 815.91) scale(0.955 1)">ALY</text>
<text transform="translate(1407.51 815.91) scale(0.955 1)">JLE</text>
<text transform="translate(1471.25 815.91) scale(0.955 1)">SCC</text>
<text transform="translate(1559.51 815.91) scale(0.955 1)">FEV</text>
<text transform="translate(176.85 799.82) scale(0.955 1)">LYR</text>
<text transform="translate(372.97 799.82) scale(0.955 1)">JMC</text>
<text transform="translate(559.29 799.82) scale(0.955 1)">JPE</text>
<text transform="translate(672.06 799.82) scale(0.955 1)">PAU</text>
<text transform="translate(775.02 799.82) scale(0.955 1)">NIA</text>
<text transform="translate(1049.59 799.82) scale(0.955 1)">STA</text>
<text transform="translate(1206.49 799.82) scale(0.955 1)">NOO</text>
<text transform="translate(1353.58 799.82) scale(0.955 1)">COM</text>
<text transform="translate(1471.25 799.82) scale(0.955 1)">NCC</text>
<text transform="translate(1564.41 799.82) scale(0.955 1)">FED</text>
<text transform="translate(206.27 782.73) scale(0.955 1)">HVI</text>
<text transform="translate(412.19 782.73) scale(0.955 1)">ARI</text>
<text transform="translate(529.87 782.73) scale(0.955 1)">SZC</text>
<text transform="translate(618.12 782.73) scale(0.955 1)">CAP</text>
<text transform="translate(819.15 782.73) scale(0.955 1)">NUE</text>
<text transform="translate(961.34 782.73) scale(0.955 1)">OCT</text>
<text transform="translate(1059.4 782.73) scale(0.955 1)">ORI</text>
<text transform="translate(1186.88 782.73) scale(0.955 1)">AMO</text>
<text transform="translate(1255.52 782.73) scale(0.955 1)">DPC</text>
<text transform="translate(1329.07 782.73) scale(0.955 1)">XVI</text>
<text transform="translate(1407.51 782.73) scale(0.955 1)">QUA</text>
<text transform="translate(1559.51 782.73) scale(0.955 1)">AAN</text>
<text transform="translate(353.36 766.64) scale(0.955 1)">TAH</text>
<text transform="translate(431.81 766.64) scale(0.955 1)">JEA</text>
<text transform="translate(480.84 766.64) scale(0.955 1)">JIP</text>
<text transform="translate(539.67 766.64) scale(0.955 1)">PPS</text>
<text transform="translate(578.9 766.64) scale(0.955 1)">ZCS</text>
<text transform="translate(632.83 766.64) scale(0.955 1)">GDR</text>
<text transform="translate(971.14 766.64) scale(0.955 1)">DRA</text>
<text transform="translate(1074.11 766.64) scale(0.955 1)">LUM</text>
<text transform="translate(1113.33 766.64) scale(0.955 1)">RPU</text>
<text transform="translate(1177.07 766.64) scale(0.955 1)">THA</text>
<text transform="translate(1260.42 766.64) scale(0.955 1)">PSU</text>
<text transform="translate(1471.25 766.64) scale(0.955 1)">XCB</text>
<text transform="translate(431.81 749.55) scale(0.955 1)">JRC</text>
<text transform="translate(544.58 749.55) scale(0.955 1)">CAN</text>
<text transform="translate(578.9 749.55) scale(0.955 1)">FAN</text>
<text transform="translate(681.86 749.55) scale(0.955 1)">PER</text>
<text transform="translate(1049.59 749.55) scale(0.955 1)">CTA</text>
<text transform="translate(1265.33 749.55) scale(0.955 1)">HYD</text>
<text transform="translate(1481.06 749.55) scale(0.955 1)">XUM</text>
<text transform="translate(441.61 733.46) scale(0.955 1)">COR</text>
<text transform="translate(657.35 733.46) scale(0.955 1)">SDA</text>
<text transform="translate(1049.59 733.46) scale(0.955 1)">LMI</text>
<text transform="translate(1167.27 733.46) scale(0.955 1)">LEO</text>
<text transform="translate(1275.13 733.46) scale(0.955 1)">EHY</text>
<text transform="translate(1500.67 733.46) scale(0.955 1)">ECV</text>
<text transform="translate(603.41 717.37) scale(0.955 1)">JXA</text>
<text transform="translate(716.18 717.37) scale(0.955 1)">KCG</text>
<text transform="translate(1157.46 717.37) scale(0.955 1)">AND</text>
<text transform="translate(1275.13 717.37) scale(0.955 1)">DAD</text>
<text transform="translate(667.15 700.28) scale(0.955 1)">ERI</text>
<text transform="translate(1108.43 700.28) scale(0.955 1)">SLD</text>
<text transform="translate(1211.39 700.28) scale(0.955 1)">ORS</text>
<text transform="translate(1299.65 700.28) scale(0.955 1)">GEM</text>
<text transform="translate(1123.14 684.19) scale(0.955 1)">KUM</text>
</g>
<g clip-path="url(#actclip)">
<g stroke="#ffffff" stroke-opacity="0.3" stroke-width="2.08" stroke-dasharray="2.08 3.44" fill="none">
<path d="M1394 842.05V641.5"/>
<path d="M1548 842.05V641.5"/>
<path d="M1687 842.05V641.5"/>
<path d="M75 842.05V641.5"/>
<path d="M219 842.05V641.5"/>
<path d="M365 842.05V641.5"/>
<path d="M506 842.05V641.5"/>
<path d="M651 842.05V641.5"/>
<path d="M797 842.05V641.5"/>
<path d="M940 842.05V641.5"/>
<path d="M1091 842.05V641.5"/>
<path d="M1239 842.05V641.5"/>
</g>
<g stroke="#ffffff" stroke-width="2.08" fill="none">
<path d="M114.34 834H122.68M118.51 829.83V838.17"/>
<path d="M240.84 834H249.18M245.01 829.83V838.17"/>
<path d="M511.49 834H519.83M515.66 829.83V838.17"/>
<path d="M706.63 834H714.97M710.8 829.83V838.17"/>
<path d="M833.62 834H841.96M837.79 829.83V838.17"/>
<path d="M962.57 834H970.91M966.74 829.83V838.17"/>
<path d="M987.09 834H995.42M991.25 829.83V838.17"/>
<path d="M1117.02 834H1125.35M1121.19 829.83V838.17"/>
<path d="M1295.98 834H1304.31M1300.15 829.83V838.17"/>
<path d="M1342.07 834H1350.4M1346.24 829.83V838.17"/>
<path d="M1413.65 834H1421.99M1417.82 829.83V838.17"/>
<path d="M1482.3 834H1490.63M1486.46 829.83V838.17"/>
<path d="M1531.33 834H1539.66M1535.49 829.83V838.17"/>
<path d="M1732.35 834H1740.69M1736.52 829.83V838.17"/>
<path d="M1766.67 834H1775.01M1770.84 829.83V838.17"/>
<path d="M173.18 818H181.51M177.35 813.83V822.17"/>
<path d="M255.55 818H263.89M259.72 813.83V822.17"/>
<path d="M323.21 818H331.55M327.38 813.83V822.17"/>
<path d="M437.95 818H446.28M442.11 813.83V822.17"/>
<path d="M598.77 818H607.1M602.93 813.83V822.17"/>
<path d="M717.42 818H725.75M721.59 813.83V822.17"/>
<path d="M793.91 818H802.24M798.07 813.83V822.17"/>
<path d="M940.02 818H948.35M944.19 813.83V822.17"/>
<path d="M1006.7 818H1015.03M1010.87 813.83V822.17"/>
<path d="M1152.81 818H1161.14M1156.98 813.83V822.17"/>
<path d="M1251.85 818H1260.19M1256.02 813.83V822.17"/>
<path d="M1300.88 818H1309.22M1305.05 813.83V822.17"/>
<path d="M1349.91 818H1358.25M1354.08 813.83V822.17"/>
<path d="M1403.85 818H1412.18M1408.01 813.83V822.17"/>
<path d="M1467.59 818H1475.92M1471.75 813.83V822.17"/>
<path d="M1555.84 818H1564.18M1560.01 813.83V822.17"/>
<path d="M174.65 802H182.99M178.82 797.83V806.17"/>
<path d="M379.11 802H387.44M383.28 797.83V806.17"/>
<path d="M545.81 802H554.15M549.98 797.83V806.17"/>
<path d="M683.1 802H691.43M687.27 797.83V806.17"/>
<path d="M741.94 802H750.27M746.1 797.83V806.17"/>
<path d="M1075.34 802H1083.68M1079.51 797.83V806.17"/>
<path d="M1217.53 802H1225.87M1221.7 797.83V806.17"/>
<path d="M1305.79 802H1314.12M1309.95 797.83V806.17"/>
<path d="M1467.59 802H1475.92M1471.75 797.83V806.17"/>
<path d="M1560.75 802H1569.08M1564.91 797.83V806.17"/>
<path d="M202.11 785H210.44M206.28 780.83V789.17"/>
<path d="M400.68 785H409.02M404.85 780.83V789.17"/>
<path d="M526.2 785H534.53M530.37 780.83V789.17"/>
<path d="M638.97 785H647.3M643.14 780.83V789.17"/>
<path d="M815.48 785H823.81M819.65 780.83V789.17"/>
<path d="M960.12 785H968.45M964.29 780.83V789.17"/>
<path d="M1041.02 785H1049.36M1045.19 780.83V789.17"/>
<path d="M1188.11 785H1196.45M1192.28 780.83V789.17"/>
<path d="M1251.85 785H1260.19M1256.02 780.83V789.17"/>
<path d="M1325.4 785H1333.73M1329.57 780.83V789.17"/>
<path d="M1403.85 785H1412.18M1408.01 780.83V789.17"/>
<path d="M1546.04 785H1554.37M1550.2 780.83V789.17"/>
<path d="M356.07 769H364.4M360.23 764.83V773.17"/>
<path d="M426.67 769H435M430.84 764.83V773.17"/>
<path d="M477.17 769H485.5M481.34 764.83V773.17"/>
<path d="M536.01 769H544.34M540.17 764.83V773.17"/>
<path d="M570.33 769H578.66M574.5 764.83V773.17"/>
<path d="M630.64 769H638.97M634.8 764.83V773.17"/>
<path d="M973.85 769H982.18M978.02 764.83V773.17"/>
<path d="M1070.44 769H1078.77M1074.61 764.83V773.17"/>
<path d="M1109.66 769H1118M1113.83 764.83V773.17"/>
<path d="M1178.31 769H1186.64M1182.47 764.83V773.17"/>
<path d="M1256.76 769H1265.09M1260.92 764.83V773.17"/>
<path d="M1467.59 769H1475.92M1471.75 764.83V773.17"/>
<path d="M428.14 752H436.47M432.31 747.83V756.17"/>
<path d="M540.91 752H549.24M545.08 747.83V756.17"/>
<path d="M575.23 752H583.57M579.4 747.83V756.17"/>
<path d="M703.69 752H712.03M707.86 747.83V756.17"/>
<path d="M1094.96 752H1103.29M1099.12 747.83V756.17"/>
<path d="M1271.47 752H1279.8M1275.63 747.83V756.17"/>
<path d="M1477.39 752H1485.73M1481.56 747.83V756.17"/>
<path d="M437.95 736H446.28M442.11 731.83V740.17"/>
<path d="M630.64 736H638.97M634.8 731.83V740.17"/>
<path d="M1039.06 736H1047.39M1043.23 731.83V740.17"/>
<path d="M1168.5 736H1176.83M1172.67 731.83V740.17"/>
<path d="M1274.9 736H1283.23M1279.06 731.83V740.17"/>
<path d="M1497.01 736H1505.34M1501.17 731.83V740.17"/>
<path d="M599.75 720H608.08M603.91 715.83V724.17"/>
<path d="M727.23 720H735.56M731.39 715.83V724.17"/>
<path d="M1188.11 720H1196.45M1192.28 715.83V724.17"/>
<path d="M1271.47 720H1279.8M1275.63 715.83V724.17"/>
<path d="M688 703H696.34M692.17 698.83V707.17"/>
<path d="M1101.82 703H1110.15M1105.99 698.83V707.17"/>
<path d="M1207.73 703H1216.06M1211.89 698.83V707.17"/>
<path d="M1300.88 703H1309.22M1305.05 698.83V707.17"/>
<path d="M1119.47 687H1127.8M1123.64 682.83V691.17"/>
</g>
</g>
<rect x="20.45" y="641.5" width="1765.1" height="201.1" fill="none" stroke="#ffffff" stroke-width="1.11"/>
<g stroke="#ffffff" stroke-width="1.11">
<path d="M20.05 842.6v4.86"/>
<path d="M265.2 842.6v4.86"/>
<path d="M510.36 842.6v4.86"/>
<path d="M755.51 842.6v4.86"/>
<path d="M1000.66 842.6v4.86"/>
<path d="M1245.81 842.6v4.86"/>
<path d="M1490.97 842.6v4.86"/>
<path d="M1736.12 842.6v4.86"/>
</g>
<g font-family="'DejaVu Sans', 'Liberation Sans', sans-serif" font-size="13.89px" fill="#ffffff" text-anchor="middle">
<text x="19.75" y="862.4" font-size="13.65px">0</text>
<text x="264.9" y="862.4" font-size="13.65px">50</text>
<text x="510.06" y="862.4" font-size="13.65px">100</text>
<text x="755.21" y="862.4" font-size="13.65px">150</text>
<text x="1000.36" y="862.4" font-size="13.65px">200</text>
<text x="1245.51" y="862.4" font-size="13.65px">250</text>
<text x="1490.67" y="862.4" font-size="13.65px">300</text>
<text x="1735.82" y="862.4" font-size="13.65px">350</text>
<text x="903" y="881.6">Solar longitude (deg)</text>
</g>
</svg>
</body></html>
